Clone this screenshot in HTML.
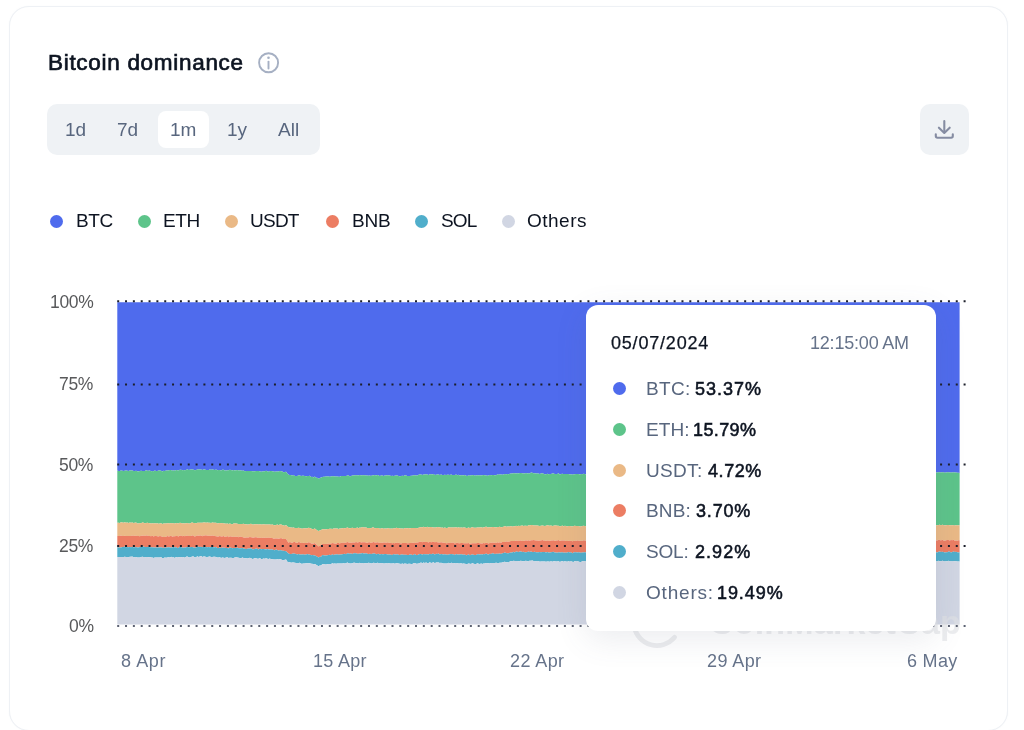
<!DOCTYPE html>
<html><head><meta charset="utf-8">
<style>
*{margin:0;padding:0;box-sizing:border-box}
html,body{width:1024px;height:730px;overflow:hidden;background:#fff;font-family:"Liberation Sans",sans-serif}
.t{position:absolute;white-space:nowrap;will-change:transform}
.b{position:absolute}
.d{position:absolute;border-radius:50%}
</style></head><body>
<div class="b" style="left:9px;top:6px;width:998.5px;height:725px;border:1px solid #eef1f5;border-radius:20px;background:#fff;box-shadow:0 0 1px rgba(200,206,220,0.25)"></div>
<div class="t" style="left:47.80px;top:49.00px;font-size:22.5px;line-height:27.0px;color:#0d1421;font-weight:400;letter-spacing:0.7px;-webkit-text-stroke:0.7px #0d1421;">Bitcoin dominance</div>
<svg class="b" style="left:256px;top:50px" width="26" height="26" viewBox="256 50 26 26">
<circle cx="268.6" cy="62.75" r="9.5" fill="none" stroke="#a6b0c3" stroke-width="1.9"/>
<circle cx="268.5" cy="57.8" r="1.3" fill="#a6b0c3"/>
<line x1="268.5" y1="61.6" x2="268.5" y2="68.6" stroke="#a6b0c3" stroke-width="1.9" stroke-linecap="round"/>
</svg>
<div class="b" style="left:47px;top:104px;width:273px;height:51px;background:#eff2f5;border-radius:10px"></div>
<div class="b" style="left:158px;top:111px;width:51px;height:37px;background:#fff;border-radius:8px"></div>
<div class="b" style="left:920px;top:104px;width:49px;height:51px;background:#eff2f5;border-radius:10px"></div>
<svg class="b" style="left:930px;top:112px" width="30" height="30" viewBox="930 112 30 30">
<path d="M944.3 121 V132" stroke="#858ca2" stroke-width="2.1" stroke-linecap="round" fill="none"/>
<path d="M938.9 127.7 L944.3 133 L949.7 127.7" stroke="#858ca2" stroke-width="2.1" stroke-linecap="round" stroke-linejoin="round" fill="none"/>
<path d="M935.8 134.2 V136.1 Q935.8 137.8 937.5 137.8 H951.1 Q952.8 137.8 952.8 136.1 V134.2" stroke="#858ca2" stroke-width="2.1" stroke-linecap="round" fill="none"/>
</svg>
<div class="t" style="left:65.40px;top:119.02px;font-size:19px;line-height:22.8px;color:#58667e;font-weight:400;letter-spacing:0px;">1d</div>
<div class="t" style="left:117.30px;top:119.02px;font-size:19px;line-height:22.8px;color:#58667e;font-weight:400;letter-spacing:0px;">7d</div>
<div class="t" style="left:170.00px;top:119.02px;font-size:19px;line-height:22.8px;color:#58667e;font-weight:400;letter-spacing:0px;">1m</div>
<div class="t" style="left:227.00px;top:119.02px;font-size:19px;line-height:22.8px;color:#58667e;font-weight:400;letter-spacing:0px;">1y</div>
<div class="t" style="left:278.00px;top:119.02px;font-size:19px;line-height:22.8px;color:#58667e;font-weight:400;letter-spacing:0px;">All</div>
<div class="d" style="left:49.90px;top:215.40px;width:13px;height:13px;background:#4f6bed"></div>
<div class="t" style="left:75.80px;top:210.02px;font-size:19px;line-height:22.8px;color:#0d1421;font-weight:400;letter-spacing:-0.45px;">BTC</div>
<div class="d" style="left:137.50px;top:215.40px;width:13px;height:13px;background:#5dc48a"></div>
<div class="t" style="left:163.20px;top:210.02px;font-size:19px;line-height:22.8px;color:#0d1421;font-weight:400;letter-spacing:-0.45px;">ETH</div>
<div class="d" style="left:224.90px;top:215.40px;width:13px;height:13px;background:#eab986"></div>
<div class="t" style="left:250.20px;top:210.02px;font-size:19px;line-height:22.8px;color:#0d1421;font-weight:400;letter-spacing:-0.75px;">USDT</div>
<div class="d" style="left:325.60px;top:215.40px;width:13px;height:13px;background:#ec7d63"></div>
<div class="t" style="left:352.00px;top:210.02px;font-size:19px;line-height:22.8px;color:#0d1421;font-weight:400;letter-spacing:-0.25px;">BNB</div>
<div class="d" style="left:414.50px;top:215.40px;width:13px;height:13px;background:#50aecb"></div>
<div class="t" style="left:440.60px;top:210.02px;font-size:19px;line-height:22.8px;color:#0d1421;font-weight:400;letter-spacing:-0.8px;">SOL</div>
<div class="d" style="left:501.70px;top:215.40px;width:13px;height:13px;background:#d1d6e3"></div>
<div class="t" style="left:527.00px;top:210.02px;font-size:19px;line-height:22.8px;color:#0d1421;font-weight:400;letter-spacing:0.5px;">Others</div>
<div class="t" style="right:930.70px;top:292.44px;font-size:17.5px;line-height:21.0px;color:#58595b;font-weight:400;letter-spacing:-0.3px">100%</div>
<div class="t" style="right:930.70px;top:374.34px;font-size:17.5px;line-height:21.0px;color:#58595b;font-weight:400;letter-spacing:-0.3px">75%</div>
<div class="t" style="right:930.70px;top:454.64px;font-size:17.5px;line-height:21.0px;color:#58595b;font-weight:400;letter-spacing:-0.3px">50%</div>
<div class="t" style="right:930.70px;top:535.84px;font-size:17.5px;line-height:21.0px;color:#58595b;font-weight:400;letter-spacing:-0.3px">25%</div>
<div class="t" style="right:930.70px;top:615.64px;font-size:17.5px;line-height:21.0px;color:#58595b;font-weight:400;letter-spacing:-0.3px">0%</div>
<svg class="b" style="left:0;top:0" width="1024" height="730" viewBox="0 0 1024 730"><polygon fill="#4f6bed" points="117.3,302.2 959.6,302.2 959.6,472.9 958.5,472.7 957.3,472.8 956.0,472.5 954.8,472.5 953.5,472.2 952.3,472.6 951.0,472.5 949.8,472.5 948.5,472.3 947.3,472.2 946.0,472.6 944.8,472.8 943.5,472.3 942.3,472.2 941.0,472.4 939.8,472.3 938.5,472.3 937.3,472.5 936.0,472.6 934.8,472.5 933.5,472.9 932.3,473.0 931.0,472.4 929.8,472.5 928.5,472.7 927.3,472.6 926.0,472.7 924.8,472.5 923.5,473.3 922.3,473.0 921.0,472.7 919.8,472.6 918.5,472.7 917.3,472.5 916.0,472.4 914.8,472.8 913.5,472.4 912.3,472.4 911.0,472.8 909.8,472.8 908.5,472.7 907.3,473.1 906.0,472.3 904.8,472.2 903.5,472.7 902.3,473.0 901.0,472.8 899.8,472.4 898.5,472.9 897.3,472.4 896.0,472.9 894.8,472.7 893.5,472.8 892.3,472.1 891.0,472.5 889.8,472.6 888.5,472.2 887.3,472.7 886.0,472.7 884.8,472.3 883.5,472.5 882.3,472.7 881.0,473.0 879.8,473.4 878.5,472.9 877.3,472.6 876.0,472.5 874.8,472.7 873.5,473.2 872.3,473.1 871.0,473.1 869.8,472.9 868.5,473.0 867.3,472.5 866.0,472.9 864.8,472.9 863.5,473.3 862.3,472.9 861.0,472.6 859.8,472.9 858.5,473.0 857.3,472.9 856.0,472.8 854.8,473.0 853.5,473.0 852.3,472.7 851.0,472.7 849.8,472.7 848.5,473.3 847.3,473.0 846.0,473.0 844.8,472.9 843.5,472.5 842.3,472.7 841.0,472.7 839.8,472.8 838.5,472.5 837.3,473.1 836.0,473.0 834.8,473.2 833.5,472.8 832.3,473.3 831.0,473.2 829.8,473.3 828.5,472.8 827.3,473.3 826.0,473.3 824.8,473.0 823.5,473.6 822.3,472.9 821.0,473.2 819.8,473.1 818.5,472.8 817.3,473.2 816.0,473.0 814.8,473.1 813.5,473.6 812.3,472.7 811.0,472.7 809.8,473.2 808.5,472.7 807.3,472.8 806.0,473.3 804.8,472.8 803.5,473.0 802.3,473.4 801.0,473.1 799.8,473.4 798.5,472.9 797.3,472.9 796.0,473.0 794.8,473.3 793.5,472.8 792.3,473.0 791.0,473.4 789.8,472.7 788.5,472.8 787.3,473.1 786.0,473.4 784.8,472.6 783.5,473.7 782.3,473.4 781.0,472.9 779.8,473.1 778.5,473.6 777.3,473.4 776.0,473.2 774.8,473.5 773.5,472.9 772.3,473.5 771.0,473.7 769.8,473.2 768.5,472.7 767.3,473.0 766.0,472.8 764.8,473.2 763.5,472.9 762.3,473.2 761.0,473.3 759.8,473.4 758.5,473.0 757.3,473.5 756.0,473.1 754.8,473.3 753.5,473.1 752.3,473.5 751.0,473.4 749.8,473.4 748.5,473.4 747.3,473.7 746.0,472.9 744.8,473.7 743.5,473.5 742.3,473.1 741.0,473.4 739.8,473.4 738.5,472.9 737.3,472.8 736.0,473.1 734.8,473.5 733.5,473.1 732.3,473.7 731.0,473.4 729.8,473.2 728.5,473.6 727.3,473.6 726.0,473.5 724.8,473.7 723.5,473.2 722.3,473.8 721.0,473.8 719.8,473.8 718.5,473.7 717.3,473.1 716.0,473.7 714.8,473.5 713.5,473.6 712.3,473.3 711.0,473.7 709.8,473.6 708.5,473.8 707.3,473.9 706.0,473.7 704.8,473.8 703.5,473.3 702.3,473.6 701.0,473.2 699.8,473.4 698.5,473.5 697.3,473.5 696.0,473.5 694.8,473.6 693.5,473.7 692.3,473.9 691.0,473.2 689.8,473.3 688.5,473.9 687.3,473.9 686.0,473.3 684.8,473.5 683.5,473.6 682.3,473.4 681.0,474.1 679.8,473.1 678.5,473.0 677.3,474.1 676.0,473.8 674.8,473.7 673.5,473.5 672.3,473.1 671.0,473.4 669.8,473.7 668.5,473.6 667.3,474.0 666.0,473.1 664.8,473.5 663.5,473.2 662.3,473.6 661.0,474.1 659.8,473.6 658.5,473.7 657.3,473.8 656.0,473.7 654.8,474.2 653.5,473.9 652.3,474.1 651.0,473.7 649.8,473.2 648.5,473.7 647.3,473.5 646.0,473.7 644.8,473.9 643.5,473.5 642.3,473.7 641.0,473.5 639.8,474.0 638.5,474.1 637.3,473.4 636.0,473.7 634.8,474.4 633.5,474.5 632.3,473.5 631.0,474.3 629.8,473.5 628.5,473.4 627.3,474.4 626.0,473.9 624.8,474.2 623.5,473.5 622.3,474.5 621.0,474.3 619.8,473.9 618.5,473.9 617.3,473.9 616.0,474.3 614.8,473.5 613.5,474.0 612.3,474.3 611.0,473.8 609.8,473.7 608.5,473.9 607.3,474.3 606.0,474.1 604.8,473.8 603.5,473.9 602.3,474.0 601.0,473.9 599.8,473.4 598.5,474.2 597.3,473.8 596.0,473.9 594.8,474.4 593.5,474.1 592.3,473.5 591.0,473.6 589.8,474.1 588.5,473.6 587.3,474.0 586.0,474.5 584.8,473.9 583.5,473.7 582.3,474.3 581.0,474.1 579.8,474.6 578.5,474.1 577.3,474.0 576.0,473.9 574.8,474.2 573.5,474.3 572.3,474.7 571.0,474.2 569.8,474.5 568.5,474.1 567.3,473.9 566.0,473.9 564.8,474.0 563.5,474.1 562.3,473.8 561.0,474.0 559.8,474.4 558.5,473.3 557.3,473.9 556.0,473.9 554.8,473.9 553.5,473.4 552.3,473.6 551.0,474.0 549.8,474.0 548.5,474.3 547.3,473.7 546.0,474.3 544.8,474.3 543.5,473.8 542.3,473.2 541.0,473.5 539.8,474.0 538.5,473.4 537.3,473.5 536.0,473.4 534.8,473.3 533.5,473.2 532.3,472.8 531.0,472.6 529.8,473.5 528.5,473.2 527.3,473.6 526.0,473.1 524.8,473.5 523.5,473.4 522.3,473.2 521.0,473.0 519.8,472.9 518.5,473.4 517.3,473.2 516.0,473.4 514.8,473.3 513.5,473.3 512.3,473.5 511.1,473.5 509.8,473.7 508.6,474.2 507.3,474.0 506.1,474.3 504.8,473.9 503.6,474.4 502.3,474.7 501.1,474.6 499.8,474.5 498.6,474.7 497.3,474.4 496.1,475.3 494.8,475.3 493.6,475.1 492.3,474.9 491.1,475.3 489.8,475.0 488.6,475.5 487.3,475.7 486.1,475.4 484.8,475.2 483.6,474.9 482.3,475.3 481.1,475.5 479.8,475.3 478.6,475.6 477.3,475.3 476.1,475.4 474.8,475.7 473.6,475.1 472.3,475.3 471.1,475.2 469.8,475.7 468.6,475.2 467.3,475.9 466.1,475.7 464.8,475.0 463.6,475.4 462.3,475.3 461.1,475.2 459.8,475.5 458.6,474.7 457.3,475.2 456.1,474.5 454.8,475.1 453.6,474.9 452.3,474.9 451.1,474.6 449.8,475.0 448.6,474.7 447.3,474.8 446.1,474.9 444.8,474.8 443.6,475.0 442.3,475.1 441.1,474.5 439.8,475.0 438.6,474.5 437.3,474.4 436.1,474.8 434.8,475.0 433.6,474.0 432.3,474.5 431.1,474.2 429.8,474.2 428.6,475.0 427.3,474.5 426.1,474.2 424.8,474.6 423.6,474.5 422.3,475.1 421.1,474.5 419.8,474.5 418.6,474.7 417.3,475.6 416.1,475.4 414.8,475.2 413.6,475.2 412.3,475.8 411.1,475.8 409.8,475.9 408.6,476.1 407.3,476.0 406.1,475.6 404.8,475.3 403.6,476.1 402.3,475.8 401.1,476.0 399.8,476.2 398.6,475.9 397.3,475.6 396.1,475.6 394.8,475.7 393.6,475.9 392.3,475.7 391.1,475.9 389.8,475.6 388.6,475.4 387.3,475.2 386.1,475.4 384.8,475.5 383.6,476.1 382.3,475.5 381.1,475.4 379.8,476.0 378.6,475.4 377.3,475.0 376.1,475.4 374.8,475.1 373.6,475.4 372.3,475.2 371.1,475.9 369.8,475.6 368.6,475.7 367.3,475.4 366.1,475.4 364.8,475.2 363.6,475.3 362.3,475.2 361.1,475.5 359.8,474.9 358.6,475.4 357.3,475.3 356.1,475.3 354.8,475.3 353.6,475.4 352.3,475.4 351.1,476.0 349.8,476.3 348.6,475.5 347.3,475.5 346.1,476.0 344.8,475.9 343.6,476.1 342.3,476.1 341.1,475.9 339.8,476.7 338.6,476.7 337.3,476.6 336.1,476.5 334.8,476.5 333.6,476.2 332.3,476.3 331.1,476.5 329.8,476.7 328.6,476.5 327.3,476.6 326.1,476.6 324.8,476.8 323.6,476.8 322.3,476.9 321.1,477.5 319.8,477.9 318.6,478.8 317.3,477.8 316.1,477.8 314.8,476.4 313.6,477.4 312.3,476.7 311.1,476.9 309.8,475.8 308.6,476.1 307.3,475.9 306.1,476.3 304.8,476.0 303.6,475.8 302.3,475.7 301.1,476.1 299.8,475.4 298.6,475.2 297.3,476.1 296.1,476.0 294.8,475.9 293.6,475.1 292.3,475.8 291.1,475.1 289.8,475.1 288.6,474.8 287.3,473.5 286.1,471.8 284.8,471.9 283.6,472.2 282.3,471.6 281.1,471.3 279.8,471.1 278.6,471.5 277.3,471.4 276.1,471.5 274.8,471.7 273.6,471.5 272.3,471.2 271.1,471.1 269.8,470.9 268.6,471.7 267.3,471.3 266.1,470.8 264.8,471.2 263.6,471.3 262.3,471.4 261.1,471.7 259.8,471.2 258.6,471.1 257.3,471.1 256.1,470.9 254.8,471.2 253.6,471.3 252.3,471.2 251.1,471.1 249.8,471.0 248.6,471.0 247.3,470.9 246.1,471.1 244.8,471.2 243.6,470.6 242.3,470.8 241.1,470.5 239.8,470.3 238.6,470.4 237.3,470.1 236.1,470.3 234.8,470.5 233.6,470.1 232.3,470.4 231.1,469.9 229.8,469.8 228.6,470.3 227.3,470.3 226.1,470.4 224.8,470.4 223.6,469.8 222.3,469.7 221.1,470.6 219.8,470.1 218.6,470.0 217.3,470.2 216.1,469.6 214.8,470.1 213.6,469.8 212.3,469.6 211.1,469.8 209.8,469.4 208.6,469.9 207.3,470.0 206.1,470.0 204.8,469.6 203.6,469.5 202.3,469.9 201.1,469.6 199.8,469.6 198.6,469.5 197.3,469.5 196.1,470.1 194.8,470.2 193.6,469.7 192.3,469.5 191.1,469.6 189.8,469.8 188.6,469.9 187.3,469.3 186.1,469.9 184.8,470.2 183.6,469.9 182.3,470.2 181.1,469.7 179.8,469.8 178.6,470.6 177.3,470.3 176.1,470.0 174.8,470.7 173.6,470.2 172.3,470.7 171.1,469.9 169.8,470.1 168.6,470.4 167.3,470.6 166.1,470.5 164.8,471.0 163.6,470.8 162.3,471.4 161.1,470.8 159.8,470.5 158.6,470.6 157.3,471.0 156.1,471.0 154.8,470.6 153.6,471.3 152.3,471.0 151.1,471.2 149.8,470.6 148.6,470.8 147.3,470.8 146.1,470.3 144.8,470.9 143.6,470.9 142.3,470.9 141.1,470.8 139.8,471.1 138.6,471.5 137.3,471.3 136.1,470.8 134.8,471.1 133.6,470.9 132.3,470.5 131.1,470.6 129.8,470.5 128.6,470.9 127.3,470.8 126.0,470.6 124.8,470.8 123.5,471.1 122.3,470.7 121.0,470.6 119.8,470.9 118.5,471.0 117.3,470.6"/><polygon fill="#5dc48a" points="117.3,470.6 118.5,471.0 119.8,470.9 121.0,470.6 122.3,470.7 123.5,471.1 124.8,470.8 126.0,470.6 127.3,470.8 128.6,470.9 129.8,470.5 131.1,470.6 132.3,470.5 133.6,470.9 134.8,471.1 136.1,470.8 137.3,471.3 138.6,471.5 139.8,471.1 141.1,470.8 142.3,470.9 143.6,470.9 144.8,470.9 146.1,470.3 147.3,470.8 148.6,470.8 149.8,470.6 151.1,471.2 152.3,471.0 153.6,471.3 154.8,470.6 156.1,471.0 157.3,471.0 158.6,470.6 159.8,470.5 161.1,470.8 162.3,471.4 163.6,470.8 164.8,471.0 166.1,470.5 167.3,470.6 168.6,470.4 169.8,470.1 171.1,469.9 172.3,470.7 173.6,470.2 174.8,470.7 176.1,470.0 177.3,470.3 178.6,470.6 179.8,469.8 181.1,469.7 182.3,470.2 183.6,469.9 184.8,470.2 186.1,469.9 187.3,469.3 188.6,469.9 189.8,469.8 191.1,469.6 192.3,469.5 193.6,469.7 194.8,470.2 196.1,470.1 197.3,469.5 198.6,469.5 199.8,469.6 201.1,469.6 202.3,469.9 203.6,469.5 204.8,469.6 206.1,470.0 207.3,470.0 208.6,469.9 209.8,469.4 211.1,469.8 212.3,469.6 213.6,469.8 214.8,470.1 216.1,469.6 217.3,470.2 218.6,470.0 219.8,470.1 221.1,470.6 222.3,469.7 223.6,469.8 224.8,470.4 226.1,470.4 227.3,470.3 228.6,470.3 229.8,469.8 231.1,469.9 232.3,470.4 233.6,470.1 234.8,470.5 236.1,470.3 237.3,470.1 238.6,470.4 239.8,470.3 241.1,470.5 242.3,470.8 243.6,470.6 244.8,471.2 246.1,471.1 247.3,470.9 248.6,471.0 249.8,471.0 251.1,471.1 252.3,471.2 253.6,471.3 254.8,471.2 256.1,470.9 257.3,471.1 258.6,471.1 259.8,471.2 261.1,471.7 262.3,471.4 263.6,471.3 264.8,471.2 266.1,470.8 267.3,471.3 268.6,471.7 269.8,470.9 271.1,471.1 272.3,471.2 273.6,471.5 274.8,471.7 276.1,471.5 277.3,471.4 278.6,471.5 279.8,471.1 281.1,471.3 282.3,471.6 283.6,472.2 284.8,471.9 286.1,471.8 287.3,473.5 288.6,474.8 289.8,475.1 291.1,475.1 292.3,475.8 293.6,475.1 294.8,475.9 296.1,476.0 297.3,476.1 298.6,475.2 299.8,475.4 301.1,476.1 302.3,475.7 303.6,475.8 304.8,476.0 306.1,476.3 307.3,475.9 308.6,476.1 309.8,475.8 311.1,476.9 312.3,476.7 313.6,477.4 314.8,476.4 316.1,477.8 317.3,477.8 318.6,478.8 319.8,477.9 321.1,477.5 322.3,476.9 323.6,476.8 324.8,476.8 326.1,476.6 327.3,476.6 328.6,476.5 329.8,476.7 331.1,476.5 332.3,476.3 333.6,476.2 334.8,476.5 336.1,476.5 337.3,476.6 338.6,476.7 339.8,476.7 341.1,475.9 342.3,476.1 343.6,476.1 344.8,475.9 346.1,476.0 347.3,475.5 348.6,475.5 349.8,476.3 351.1,476.0 352.3,475.4 353.6,475.4 354.8,475.3 356.1,475.3 357.3,475.3 358.6,475.4 359.8,474.9 361.1,475.5 362.3,475.2 363.6,475.3 364.8,475.2 366.1,475.4 367.3,475.4 368.6,475.7 369.8,475.6 371.1,475.9 372.3,475.2 373.6,475.4 374.8,475.1 376.1,475.4 377.3,475.0 378.6,475.4 379.8,476.0 381.1,475.4 382.3,475.5 383.6,476.1 384.8,475.5 386.1,475.4 387.3,475.2 388.6,475.4 389.8,475.6 391.1,475.9 392.3,475.7 393.6,475.9 394.8,475.7 396.1,475.6 397.3,475.6 398.6,475.9 399.8,476.2 401.1,476.0 402.3,475.8 403.6,476.1 404.8,475.3 406.1,475.6 407.3,476.0 408.6,476.1 409.8,475.9 411.1,475.8 412.3,475.8 413.6,475.2 414.8,475.2 416.1,475.4 417.3,475.6 418.6,474.7 419.8,474.5 421.1,474.5 422.3,475.1 423.6,474.5 424.8,474.6 426.1,474.2 427.3,474.5 428.6,475.0 429.8,474.2 431.1,474.2 432.3,474.5 433.6,474.0 434.8,475.0 436.1,474.8 437.3,474.4 438.6,474.5 439.8,475.0 441.1,474.5 442.3,475.1 443.6,475.0 444.8,474.8 446.1,474.9 447.3,474.8 448.6,474.7 449.8,475.0 451.1,474.6 452.3,474.9 453.6,474.9 454.8,475.1 456.1,474.5 457.3,475.2 458.6,474.7 459.8,475.5 461.1,475.2 462.3,475.3 463.6,475.4 464.8,475.0 466.1,475.7 467.3,475.9 468.6,475.2 469.8,475.7 471.1,475.2 472.3,475.3 473.6,475.1 474.8,475.7 476.1,475.4 477.3,475.3 478.6,475.6 479.8,475.3 481.1,475.5 482.3,475.3 483.6,474.9 484.8,475.2 486.1,475.4 487.3,475.7 488.6,475.5 489.8,475.0 491.1,475.3 492.3,474.9 493.6,475.1 494.8,475.3 496.1,475.3 497.3,474.4 498.6,474.7 499.8,474.5 501.1,474.6 502.3,474.7 503.6,474.4 504.8,473.9 506.1,474.3 507.3,474.0 508.6,474.2 509.8,473.7 511.1,473.5 512.3,473.5 513.5,473.3 514.8,473.3 516.0,473.4 517.3,473.2 518.5,473.4 519.8,472.9 521.0,473.0 522.3,473.2 523.5,473.4 524.8,473.5 526.0,473.1 527.3,473.6 528.5,473.2 529.8,473.5 531.0,472.6 532.3,472.8 533.5,473.2 534.8,473.3 536.0,473.4 537.3,473.5 538.5,473.4 539.8,474.0 541.0,473.5 542.3,473.2 543.5,473.8 544.8,474.3 546.0,474.3 547.3,473.7 548.5,474.3 549.8,474.0 551.0,474.0 552.3,473.6 553.5,473.4 554.8,473.9 556.0,473.9 557.3,473.9 558.5,473.3 559.8,474.4 561.0,474.0 562.3,473.8 563.5,474.1 564.8,474.0 566.0,473.9 567.3,473.9 568.5,474.1 569.8,474.5 571.0,474.2 572.3,474.7 573.5,474.3 574.8,474.2 576.0,473.9 577.3,474.0 578.5,474.1 579.8,474.6 581.0,474.1 582.3,474.3 583.5,473.7 584.8,473.9 586.0,474.5 587.3,474.0 588.5,473.6 589.8,474.1 591.0,473.6 592.3,473.5 593.5,474.1 594.8,474.4 596.0,473.9 597.3,473.8 598.5,474.2 599.8,473.4 601.0,473.9 602.3,474.0 603.5,473.9 604.8,473.8 606.0,474.1 607.3,474.3 608.5,473.9 609.8,473.7 611.0,473.8 612.3,474.3 613.5,474.0 614.8,473.5 616.0,474.3 617.3,473.9 618.5,473.9 619.8,473.9 621.0,474.3 622.3,474.5 623.5,473.5 624.8,474.2 626.0,473.9 627.3,474.4 628.5,473.4 629.8,473.5 631.0,474.3 632.3,473.5 633.5,474.5 634.8,474.4 636.0,473.7 637.3,473.4 638.5,474.1 639.8,474.0 641.0,473.5 642.3,473.7 643.5,473.5 644.8,473.9 646.0,473.7 647.3,473.5 648.5,473.7 649.8,473.2 651.0,473.7 652.3,474.1 653.5,473.9 654.8,474.2 656.0,473.7 657.3,473.8 658.5,473.7 659.8,473.6 661.0,474.1 662.3,473.6 663.5,473.2 664.8,473.5 666.0,473.1 667.3,474.0 668.5,473.6 669.8,473.7 671.0,473.4 672.3,473.1 673.5,473.5 674.8,473.7 676.0,473.8 677.3,474.1 678.5,473.0 679.8,473.1 681.0,474.1 682.3,473.4 683.5,473.6 684.8,473.5 686.0,473.3 687.3,473.9 688.5,473.9 689.8,473.3 691.0,473.2 692.3,473.9 693.5,473.7 694.8,473.6 696.0,473.5 697.3,473.5 698.5,473.5 699.8,473.4 701.0,473.2 702.3,473.6 703.5,473.3 704.8,473.8 706.0,473.7 707.3,473.9 708.5,473.8 709.8,473.6 711.0,473.7 712.3,473.3 713.5,473.6 714.8,473.5 716.0,473.7 717.3,473.1 718.5,473.7 719.8,473.8 721.0,473.8 722.3,473.8 723.5,473.2 724.8,473.7 726.0,473.5 727.3,473.6 728.5,473.6 729.8,473.2 731.0,473.4 732.3,473.7 733.5,473.1 734.8,473.5 736.0,473.1 737.3,472.8 738.5,472.9 739.8,473.4 741.0,473.4 742.3,473.1 743.5,473.5 744.8,473.7 746.0,472.9 747.3,473.7 748.5,473.4 749.8,473.4 751.0,473.4 752.3,473.5 753.5,473.1 754.8,473.3 756.0,473.1 757.3,473.5 758.5,473.0 759.8,473.4 761.0,473.3 762.3,473.2 763.5,472.9 764.8,473.2 766.0,472.8 767.3,473.0 768.5,472.7 769.8,473.2 771.0,473.7 772.3,473.5 773.5,472.9 774.8,473.5 776.0,473.2 777.3,473.4 778.5,473.6 779.8,473.1 781.0,472.9 782.3,473.4 783.5,473.7 784.8,472.6 786.0,473.4 787.3,473.1 788.5,472.8 789.8,472.7 791.0,473.4 792.3,473.0 793.5,472.8 794.8,473.3 796.0,473.0 797.3,472.9 798.5,472.9 799.8,473.4 801.0,473.1 802.3,473.4 803.5,473.0 804.8,472.8 806.0,473.3 807.3,472.8 808.5,472.7 809.8,473.2 811.0,472.7 812.3,472.7 813.5,473.6 814.8,473.1 816.0,473.0 817.3,473.2 818.5,472.8 819.8,473.1 821.0,473.2 822.3,472.9 823.5,473.6 824.8,473.0 826.0,473.3 827.3,473.3 828.5,472.8 829.8,473.3 831.0,473.2 832.3,473.3 833.5,472.8 834.8,473.2 836.0,473.0 837.3,473.1 838.5,472.5 839.8,472.8 841.0,472.7 842.3,472.7 843.5,472.5 844.8,472.9 846.0,473.0 847.3,473.0 848.5,473.3 849.8,472.7 851.0,472.7 852.3,472.7 853.5,473.0 854.8,473.0 856.0,472.8 857.3,472.9 858.5,473.0 859.8,472.9 861.0,472.6 862.3,472.9 863.5,473.3 864.8,472.9 866.0,472.9 867.3,472.5 868.5,473.0 869.8,472.9 871.0,473.1 872.3,473.1 873.5,473.2 874.8,472.7 876.0,472.5 877.3,472.6 878.5,472.9 879.8,473.4 881.0,473.0 882.3,472.7 883.5,472.5 884.8,472.3 886.0,472.7 887.3,472.7 888.5,472.2 889.8,472.6 891.0,472.5 892.3,472.1 893.5,472.8 894.8,472.7 896.0,472.9 897.3,472.4 898.5,472.9 899.8,472.4 901.0,472.8 902.3,473.0 903.5,472.7 904.8,472.2 906.0,472.3 907.3,473.1 908.5,472.7 909.8,472.8 911.0,472.8 912.3,472.4 913.5,472.4 914.8,472.8 916.0,472.4 917.3,472.5 918.5,472.7 919.8,472.6 921.0,472.7 922.3,473.0 923.5,473.3 924.8,472.5 926.0,472.7 927.3,472.6 928.5,472.7 929.8,472.5 931.0,472.4 932.3,473.0 933.5,472.9 934.8,472.5 936.0,472.6 937.3,472.5 938.5,472.3 939.8,472.3 941.0,472.4 942.3,472.2 943.5,472.3 944.8,472.8 946.0,472.6 947.3,472.2 948.5,472.3 949.8,472.5 951.0,472.5 952.3,472.6 953.5,472.2 954.8,472.5 956.0,472.5 957.3,472.8 958.5,472.7 959.6,472.9 959.6,525.3 958.5,525.3 957.3,525.6 956.0,525.1 954.8,525.7 953.5,524.9 952.3,525.2 951.0,525.3 949.8,525.3 948.5,525.0 947.3,525.0 946.0,525.3 944.8,525.4 943.5,525.0 942.3,524.7 941.0,525.2 939.8,524.8 938.5,525.0 937.3,525.2 936.0,525.2 934.8,525.1 933.5,525.4 932.3,525.2 931.0,525.0 929.8,524.9 928.5,525.8 927.3,525.1 926.0,525.0 924.8,525.1 923.5,525.2 922.3,525.4 921.0,525.5 919.8,524.8 918.5,525.8 917.3,525.4 916.0,525.1 914.8,525.3 913.5,525.4 912.3,525.2 911.0,525.4 909.8,525.3 908.5,525.1 907.3,525.2 906.0,525.0 904.8,525.1 903.5,525.7 902.3,525.2 901.0,524.8 899.8,525.2 898.5,525.1 897.3,524.9 896.0,525.3 894.8,525.3 893.5,525.3 892.3,525.2 891.0,524.9 889.8,525.5 888.5,524.7 887.3,525.7 886.0,525.6 884.8,525.3 883.5,524.9 882.3,525.1 881.0,525.2 879.8,525.6 878.5,525.8 877.3,525.4 876.0,524.8 874.8,525.6 873.5,525.7 872.3,525.4 871.0,525.4 869.8,525.1 868.5,525.3 867.3,524.9 866.0,525.5 864.8,525.7 863.5,525.8 862.3,524.9 861.0,525.0 859.8,525.7 858.5,526.0 857.3,525.4 856.0,525.5 854.8,525.4 853.5,525.2 852.3,525.7 851.0,525.1 849.8,525.5 848.5,525.3 847.3,525.1 846.0,524.8 844.8,525.1 843.5,525.2 842.3,525.2 841.0,525.3 839.8,525.3 838.5,525.2 837.3,525.5 836.0,525.5 834.8,525.6 833.5,525.4 832.3,525.4 831.0,526.0 829.8,525.5 828.5,524.9 827.3,526.0 826.0,525.3 824.8,525.0 823.5,525.7 822.3,525.3 821.0,525.5 819.8,525.7 818.5,525.0 817.3,525.5 816.0,525.4 814.8,525.1 813.5,525.5 812.3,525.2 811.0,525.1 809.8,524.9 808.5,525.3 807.3,525.0 806.0,525.5 804.8,525.2 803.5,525.4 802.3,525.5 801.0,525.2 799.8,525.2 798.5,525.3 797.3,525.6 796.0,525.2 794.8,525.7 793.5,525.4 792.3,525.5 791.0,525.5 789.8,525.5 788.5,525.7 787.3,525.3 786.0,525.7 784.8,525.0 783.5,525.9 782.3,525.3 781.0,525.0 779.8,525.4 778.5,525.5 777.3,525.5 776.0,525.8 774.8,525.9 773.5,525.8 772.3,525.4 771.0,525.5 769.8,525.0 768.5,525.2 767.3,525.2 766.0,525.4 764.8,525.3 763.5,525.6 762.3,525.1 761.0,525.3 759.8,525.5 758.5,525.5 757.3,526.1 756.0,525.8 754.8,525.6 753.5,525.6 752.3,526.2 751.0,525.2 749.8,525.8 748.5,525.3 747.3,525.9 746.0,525.4 744.8,525.7 743.5,525.8 742.3,525.1 741.0,525.3 739.8,525.6 738.5,525.3 737.3,525.4 736.0,525.4 734.8,525.4 733.5,525.0 732.3,525.4 731.0,525.5 729.8,525.5 728.5,525.7 727.3,525.6 726.0,526.0 724.8,525.6 723.5,525.5 722.3,525.8 721.0,525.7 719.8,525.4 718.5,526.1 717.3,525.7 716.0,526.0 714.8,525.6 713.5,525.6 712.3,525.4 711.0,525.7 709.8,525.8 708.5,526.1 707.3,525.6 706.0,526.0 704.8,526.0 703.5,525.4 702.3,525.4 701.0,525.1 699.8,525.6 698.5,525.5 697.3,525.5 696.0,525.5 694.8,525.2 693.5,526.2 692.3,525.6 691.0,525.4 689.8,525.6 688.5,525.6 687.3,525.4 686.0,526.0 684.8,525.7 683.5,526.0 682.3,525.9 681.0,525.9 679.8,525.7 678.5,525.7 677.3,526.3 676.0,526.1 674.8,526.1 673.5,525.4 672.3,525.5 671.0,525.4 669.8,525.8 668.5,525.8 667.3,525.4 666.0,525.7 664.8,525.8 663.5,525.3 662.3,525.7 661.0,526.1 659.8,525.7 658.5,525.9 657.3,525.5 656.0,525.8 654.8,525.8 653.5,526.1 652.3,526.0 651.0,525.9 649.8,525.7 648.5,525.8 647.3,525.7 646.0,525.4 644.8,526.3 643.5,525.5 642.3,526.0 641.0,525.4 639.8,525.8 638.5,526.2 637.3,525.5 636.0,525.9 634.8,526.1 633.5,526.1 632.3,525.6 631.0,525.9 629.8,525.7 628.5,525.9 627.3,526.4 626.0,526.1 624.8,526.4 623.5,525.7 622.3,526.3 621.0,526.3 619.8,526.0 618.5,526.2 617.3,525.9 616.0,526.1 614.8,525.6 613.5,525.9 612.3,525.9 611.0,526.2 609.8,525.9 608.5,525.9 607.3,526.0 606.0,526.0 604.8,525.8 603.5,526.1 602.3,525.5 601.0,526.1 599.8,525.6 598.5,526.0 597.3,526.1 596.0,526.1 594.8,526.5 593.5,525.7 592.3,525.8 591.0,525.8 589.8,526.6 588.5,525.6 587.3,526.1 586.0,526.2 584.8,526.0 583.5,525.7 582.3,525.9 581.0,526.5 579.8,526.4 578.5,525.9 577.3,525.9 576.0,526.0 574.8,525.8 573.5,526.1 572.3,526.4 571.0,526.2 569.8,525.9 568.5,525.9 567.3,526.4 566.0,526.1 564.8,525.8 563.5,526.5 562.3,525.6 561.0,526.2 559.8,526.3 558.5,525.8 557.3,525.8 556.0,525.6 554.8,525.6 553.5,525.8 552.3,526.1 551.0,525.6 549.8,525.7 548.5,525.6 547.3,525.3 546.0,525.7 544.8,526.0 543.5,525.8 542.3,525.4 541.0,525.8 539.8,526.0 538.5,525.7 537.3,525.4 536.0,525.6 534.8,525.5 533.5,525.4 532.3,524.9 531.0,525.1 529.8,525.5 528.5,525.2 527.3,526.0 526.0,525.7 524.8,525.8 523.5,526.0 522.3,525.5 521.0,525.7 519.8,525.9 518.5,525.8 517.3,526.2 516.0,525.8 514.8,526.5 513.5,526.1 512.3,526.8 511.1,526.1 509.8,526.6 508.6,526.4 507.3,526.5 506.1,526.8 504.8,526.1 503.6,526.8 502.3,526.9 501.1,527.3 499.8,526.8 498.6,526.9 497.3,527.0 496.1,527.5 494.8,527.2 493.6,527.0 492.3,527.1 491.1,527.2 489.8,527.2 488.6,527.3 487.3,527.4 486.1,526.6 484.8,527.3 483.6,527.3 482.3,527.7 481.1,527.3 479.8,527.5 478.6,527.4 477.3,527.4 476.1,527.7 474.8,527.7 473.6,527.7 472.3,527.0 471.1,527.8 469.8,527.9 468.6,527.4 467.3,528.1 466.1,528.1 464.8,527.6 463.6,527.6 462.3,527.8 461.1,527.5 459.8,527.8 458.6,527.2 457.3,527.8 456.1,527.3 454.8,527.5 453.6,527.5 452.3,527.6 451.1,527.5 449.8,527.4 448.6,527.2 447.3,527.9 446.1,527.9 444.8,527.6 443.6,528.0 442.3,527.6 441.1,527.8 439.8,527.3 438.6,527.3 437.3,527.1 436.1,527.5 434.8,527.4 433.6,527.4 432.3,527.3 431.1,526.9 429.8,526.9 428.6,527.5 427.3,526.8 426.1,527.2 424.8,527.3 423.6,526.7 422.3,527.4 421.1,526.9 419.8,527.4 418.6,527.7 417.3,528.3 416.1,527.9 414.8,528.0 413.6,527.9 412.3,527.9 411.1,528.0 409.8,528.4 408.6,528.0 407.3,528.2 406.1,528.2 404.8,528.0 403.6,528.8 402.3,528.6 401.1,528.5 399.8,528.5 398.6,528.1 397.3,528.1 396.1,527.8 394.8,528.6 393.6,528.0 392.3,528.7 391.1,528.5 389.8,528.8 388.6,528.0 387.3,528.4 386.1,528.6 384.8,528.4 383.6,528.8 382.3,528.1 381.1,528.5 379.8,528.7 378.6,528.1 377.3,527.9 376.1,527.9 374.8,528.2 373.6,527.5 372.3,527.5 371.1,528.3 369.8,527.9 368.6,528.1 367.3,527.9 366.1,527.4 364.8,527.5 363.6,527.6 362.3,527.1 361.1,527.7 359.8,527.6 358.6,528.2 357.3,527.6 356.1,528.0 354.8,528.0 353.6,527.9 352.3,527.7 351.1,528.1 349.8,528.3 348.6,528.0 347.3,527.4 346.1,528.0 344.8,528.3 343.6,528.0 342.3,528.3 341.1,528.6 339.8,528.4 338.6,528.9 337.3,528.4 336.1,528.5 334.8,528.5 333.6,528.6 332.3,528.9 331.1,528.7 329.8,528.7 328.6,528.9 327.3,529.1 326.1,529.4 324.8,529.2 323.6,529.2 322.3,529.3 321.1,530.1 319.8,530.6 318.6,531.1 317.3,530.4 316.1,529.5 314.8,528.6 313.6,529.0 312.3,529.2 311.1,528.6 309.8,527.9 308.6,527.8 307.3,528.3 306.1,528.3 304.8,528.4 303.6,528.1 302.3,528.7 301.1,528.5 299.8,528.0 298.6,527.7 297.3,527.9 296.1,528.1 294.8,528.0 293.6,527.5 292.3,527.7 291.1,527.6 289.8,527.4 288.6,527.0 287.3,526.4 286.1,524.9 284.8,525.7 283.6,525.6 282.3,525.0 281.1,524.6 279.8,524.5 278.6,525.3 277.3,524.4 276.1,525.1 274.8,525.2 273.6,524.9 272.3,524.6 271.1,524.7 269.8,524.5 268.6,524.6 267.3,524.5 266.1,524.5 264.8,524.5 263.6,524.2 262.3,524.5 261.1,524.5 259.8,524.3 258.6,524.5 257.3,524.2 256.1,524.2 254.8,524.3 253.6,524.5 252.3,524.6 251.1,523.8 249.8,523.9 248.6,524.6 247.3,524.4 246.1,524.2 244.8,524.2 243.6,523.8 242.3,524.0 241.1,523.9 239.8,523.9 238.6,523.9 237.3,523.8 236.1,523.6 234.8,523.6 233.6,523.4 232.3,524.3 231.1,523.9 229.8,523.4 228.6,524.1 227.3,523.6 226.1,523.7 224.8,523.5 223.6,523.6 222.3,522.9 221.1,523.3 219.8,522.9 218.6,523.2 217.3,523.5 216.1,522.7 214.8,522.7 213.6,522.8 212.3,522.5 211.1,523.0 209.8,522.7 208.6,522.8 207.3,522.4 206.1,522.7 204.8,522.6 203.6,522.5 202.3,522.7 201.1,522.7 199.8,522.8 198.6,522.8 197.3,522.7 196.1,523.2 194.8,523.1 193.6,523.1 192.3,522.6 191.1,522.8 189.8,523.6 188.6,523.4 187.3,522.9 186.1,523.2 184.8,523.6 183.6,523.3 182.3,523.5 181.1,522.9 179.8,522.8 178.6,523.6 177.3,523.3 176.1,523.1 174.8,523.7 173.6,523.1 172.3,523.4 171.1,522.9 169.8,523.6 168.6,523.2 167.3,523.2 166.1,523.6 164.8,523.5 163.6,523.5 162.3,524.1 161.1,523.2 159.8,523.6 158.6,523.7 157.3,523.2 156.1,523.4 154.8,523.2 153.6,523.6 152.3,523.3 151.1,523.4 149.8,523.2 148.6,523.0 147.3,522.8 146.1,523.1 144.8,523.2 143.6,522.7 142.3,522.6 141.1,523.2 139.8,522.9 138.6,523.4 137.3,523.6 136.1,522.5 134.8,522.7 133.6,522.9 132.3,522.5 131.1,522.7 129.8,522.6 128.6,523.0 127.3,522.6 126.0,522.7 124.8,522.2 123.5,522.7 122.3,522.6 121.0,522.3 119.8,523.1 118.5,522.7 117.3,522.7"/><polygon fill="#eab986" points="117.3,522.7 118.5,522.7 119.8,523.1 121.0,522.3 122.3,522.6 123.5,522.7 124.8,522.2 126.0,522.7 127.3,522.6 128.6,523.0 129.8,522.6 131.1,522.7 132.3,522.5 133.6,522.9 134.8,522.7 136.1,522.5 137.3,523.6 138.6,523.4 139.8,522.9 141.1,523.2 142.3,522.6 143.6,522.7 144.8,523.2 146.1,523.1 147.3,522.8 148.6,523.0 149.8,523.2 151.1,523.4 152.3,523.3 153.6,523.6 154.8,523.2 156.1,523.4 157.3,523.2 158.6,523.7 159.8,523.6 161.1,523.2 162.3,524.1 163.6,523.5 164.8,523.5 166.1,523.6 167.3,523.2 168.6,523.2 169.8,523.6 171.1,522.9 172.3,523.4 173.6,523.1 174.8,523.7 176.1,523.1 177.3,523.3 178.6,523.6 179.8,522.8 181.1,522.9 182.3,523.5 183.6,523.3 184.8,523.6 186.1,523.2 187.3,522.9 188.6,523.4 189.8,523.6 191.1,522.8 192.3,522.6 193.6,523.1 194.8,523.1 196.1,523.2 197.3,522.7 198.6,522.8 199.8,522.8 201.1,522.7 202.3,522.7 203.6,522.5 204.8,522.6 206.1,522.7 207.3,522.4 208.6,522.8 209.8,522.7 211.1,523.0 212.3,522.5 213.6,522.8 214.8,522.7 216.1,522.7 217.3,523.5 218.6,523.2 219.8,522.9 221.1,523.3 222.3,522.9 223.6,523.6 224.8,523.5 226.1,523.7 227.3,523.6 228.6,524.1 229.8,523.4 231.1,523.9 232.3,524.3 233.6,523.4 234.8,523.6 236.1,523.6 237.3,523.8 238.6,523.9 239.8,523.9 241.1,523.9 242.3,524.0 243.6,523.8 244.8,524.2 246.1,524.2 247.3,524.4 248.6,524.6 249.8,523.9 251.1,523.8 252.3,524.6 253.6,524.5 254.8,524.3 256.1,524.2 257.3,524.2 258.6,524.5 259.8,524.3 261.1,524.5 262.3,524.5 263.6,524.2 264.8,524.5 266.1,524.5 267.3,524.5 268.6,524.6 269.8,524.5 271.1,524.7 272.3,524.6 273.6,524.9 274.8,525.2 276.1,525.1 277.3,524.4 278.6,525.3 279.8,524.5 281.1,524.6 282.3,525.0 283.6,525.6 284.8,525.7 286.1,524.9 287.3,526.4 288.6,527.0 289.8,527.4 291.1,527.6 292.3,527.7 293.6,527.5 294.8,528.0 296.1,528.1 297.3,527.9 298.6,527.7 299.8,528.0 301.1,528.5 302.3,528.7 303.6,528.1 304.8,528.4 306.1,528.3 307.3,528.3 308.6,527.8 309.8,527.9 311.1,528.6 312.3,529.2 313.6,529.0 314.8,528.6 316.1,529.5 317.3,530.4 318.6,531.1 319.8,530.6 321.1,530.1 322.3,529.3 323.6,529.2 324.8,529.2 326.1,529.4 327.3,529.1 328.6,528.9 329.8,528.7 331.1,528.7 332.3,528.9 333.6,528.6 334.8,528.5 336.1,528.5 337.3,528.4 338.6,528.9 339.8,528.4 341.1,528.6 342.3,528.3 343.6,528.0 344.8,528.3 346.1,528.0 347.3,527.4 348.6,528.0 349.8,528.3 351.1,528.1 352.3,527.7 353.6,527.9 354.8,528.0 356.1,528.0 357.3,527.6 358.6,528.2 359.8,527.6 361.1,527.7 362.3,527.1 363.6,527.6 364.8,527.5 366.1,527.4 367.3,527.9 368.6,528.1 369.8,527.9 371.1,528.3 372.3,527.5 373.6,527.5 374.8,528.2 376.1,527.9 377.3,527.9 378.6,528.1 379.8,528.7 381.1,528.5 382.3,528.1 383.6,528.8 384.8,528.4 386.1,528.6 387.3,528.4 388.6,528.0 389.8,528.8 391.1,528.5 392.3,528.7 393.6,528.0 394.8,528.6 396.1,527.8 397.3,528.1 398.6,528.1 399.8,528.5 401.1,528.5 402.3,528.6 403.6,528.8 404.8,528.0 406.1,528.2 407.3,528.2 408.6,528.0 409.8,528.4 411.1,528.0 412.3,527.9 413.6,527.9 414.8,528.0 416.1,527.9 417.3,528.3 418.6,527.7 419.8,527.4 421.1,526.9 422.3,527.4 423.6,526.7 424.8,527.3 426.1,527.2 427.3,526.8 428.6,527.5 429.8,526.9 431.1,526.9 432.3,527.3 433.6,527.4 434.8,527.4 436.1,527.5 437.3,527.1 438.6,527.3 439.8,527.3 441.1,527.8 442.3,527.6 443.6,528.0 444.8,527.6 446.1,527.9 447.3,527.9 448.6,527.2 449.8,527.4 451.1,527.5 452.3,527.6 453.6,527.5 454.8,527.5 456.1,527.3 457.3,527.8 458.6,527.2 459.8,527.8 461.1,527.5 462.3,527.8 463.6,527.6 464.8,527.6 466.1,528.1 467.3,528.1 468.6,527.4 469.8,527.9 471.1,527.8 472.3,527.0 473.6,527.7 474.8,527.7 476.1,527.7 477.3,527.4 478.6,527.4 479.8,527.5 481.1,527.3 482.3,527.7 483.6,527.3 484.8,527.3 486.1,526.6 487.3,527.4 488.6,527.3 489.8,527.2 491.1,527.2 492.3,527.1 493.6,527.0 494.8,527.2 496.1,527.5 497.3,527.0 498.6,526.9 499.8,526.8 501.1,527.3 502.3,526.9 503.6,526.8 504.8,526.1 506.1,526.8 507.3,526.5 508.6,526.4 509.8,526.6 511.1,526.1 512.3,526.8 513.5,526.1 514.8,526.5 516.0,525.8 517.3,526.2 518.5,525.8 519.8,525.9 521.0,525.7 522.3,525.5 523.5,526.0 524.8,525.8 526.0,525.7 527.3,526.0 528.5,525.2 529.8,525.5 531.0,525.1 532.3,524.9 533.5,525.4 534.8,525.5 536.0,525.6 537.3,525.4 538.5,525.7 539.8,526.0 541.0,525.8 542.3,525.4 543.5,525.8 544.8,526.0 546.0,525.7 547.3,525.3 548.5,525.6 549.8,525.7 551.0,525.6 552.3,526.1 553.5,525.8 554.8,525.6 556.0,525.6 557.3,525.8 558.5,525.8 559.8,526.3 561.0,526.2 562.3,525.6 563.5,526.5 564.8,525.8 566.0,526.1 567.3,526.4 568.5,525.9 569.8,525.9 571.0,526.2 572.3,526.4 573.5,526.1 574.8,525.8 576.0,526.0 577.3,525.9 578.5,525.9 579.8,526.4 581.0,526.5 582.3,525.9 583.5,525.7 584.8,526.0 586.0,526.2 587.3,526.1 588.5,525.6 589.8,526.6 591.0,525.8 592.3,525.8 593.5,525.7 594.8,526.5 596.0,526.1 597.3,526.1 598.5,526.0 599.8,525.6 601.0,526.1 602.3,525.5 603.5,526.1 604.8,525.8 606.0,526.0 607.3,526.0 608.5,525.9 609.8,525.9 611.0,526.2 612.3,525.9 613.5,525.9 614.8,525.6 616.0,526.1 617.3,525.9 618.5,526.2 619.8,526.0 621.0,526.3 622.3,526.3 623.5,525.7 624.8,526.4 626.0,526.1 627.3,526.4 628.5,525.9 629.8,525.7 631.0,525.9 632.3,525.6 633.5,526.1 634.8,526.1 636.0,525.9 637.3,525.5 638.5,526.2 639.8,525.8 641.0,525.4 642.3,526.0 643.5,525.5 644.8,526.3 646.0,525.4 647.3,525.7 648.5,525.8 649.8,525.7 651.0,525.9 652.3,526.0 653.5,526.1 654.8,525.8 656.0,525.8 657.3,525.5 658.5,525.9 659.8,525.7 661.0,526.1 662.3,525.7 663.5,525.3 664.8,525.8 666.0,525.7 667.3,525.4 668.5,525.8 669.8,525.8 671.0,525.4 672.3,525.5 673.5,525.4 674.8,526.1 676.0,526.1 677.3,526.3 678.5,525.7 679.8,525.7 681.0,525.9 682.3,525.9 683.5,526.0 684.8,525.7 686.0,526.0 687.3,525.4 688.5,525.6 689.8,525.6 691.0,525.4 692.3,525.6 693.5,526.2 694.8,525.2 696.0,525.5 697.3,525.5 698.5,525.5 699.8,525.6 701.0,525.1 702.3,525.4 703.5,525.4 704.8,526.0 706.0,526.0 707.3,525.6 708.5,526.1 709.8,525.8 711.0,525.7 712.3,525.4 713.5,525.6 714.8,525.6 716.0,526.0 717.3,525.7 718.5,526.1 719.8,525.4 721.0,525.7 722.3,525.8 723.5,525.5 724.8,525.6 726.0,526.0 727.3,525.6 728.5,525.7 729.8,525.5 731.0,525.5 732.3,525.4 733.5,525.0 734.8,525.4 736.0,525.4 737.3,525.4 738.5,525.3 739.8,525.6 741.0,525.3 742.3,525.1 743.5,525.8 744.8,525.7 746.0,525.4 747.3,525.9 748.5,525.3 749.8,525.8 751.0,525.2 752.3,526.2 753.5,525.6 754.8,525.6 756.0,525.8 757.3,526.1 758.5,525.5 759.8,525.5 761.0,525.3 762.3,525.1 763.5,525.6 764.8,525.3 766.0,525.4 767.3,525.2 768.5,525.2 769.8,525.0 771.0,525.5 772.3,525.4 773.5,525.8 774.8,525.9 776.0,525.8 777.3,525.5 778.5,525.5 779.8,525.4 781.0,525.0 782.3,525.3 783.5,525.9 784.8,525.0 786.0,525.7 787.3,525.3 788.5,525.7 789.8,525.5 791.0,525.5 792.3,525.5 793.5,525.4 794.8,525.7 796.0,525.2 797.3,525.6 798.5,525.3 799.8,525.2 801.0,525.2 802.3,525.5 803.5,525.4 804.8,525.2 806.0,525.5 807.3,525.0 808.5,525.3 809.8,524.9 811.0,525.1 812.3,525.2 813.5,525.5 814.8,525.1 816.0,525.4 817.3,525.5 818.5,525.0 819.8,525.7 821.0,525.5 822.3,525.3 823.5,525.7 824.8,525.0 826.0,525.3 827.3,526.0 828.5,524.9 829.8,525.5 831.0,526.0 832.3,525.4 833.5,525.4 834.8,525.6 836.0,525.5 837.3,525.5 838.5,525.2 839.8,525.3 841.0,525.3 842.3,525.2 843.5,525.2 844.8,525.1 846.0,524.8 847.3,525.1 848.5,525.3 849.8,525.5 851.0,525.1 852.3,525.7 853.5,525.2 854.8,525.4 856.0,525.5 857.3,525.4 858.5,526.0 859.8,525.7 861.0,525.0 862.3,524.9 863.5,525.8 864.8,525.7 866.0,525.5 867.3,524.9 868.5,525.3 869.8,525.1 871.0,525.4 872.3,525.4 873.5,525.7 874.8,525.6 876.0,524.8 877.3,525.4 878.5,525.8 879.8,525.6 881.0,525.2 882.3,525.1 883.5,524.9 884.8,525.3 886.0,525.6 887.3,525.7 888.5,524.7 889.8,525.5 891.0,524.9 892.3,525.2 893.5,525.3 894.8,525.3 896.0,525.3 897.3,524.9 898.5,525.1 899.8,525.2 901.0,524.8 902.3,525.2 903.5,525.7 904.8,525.1 906.0,525.0 907.3,525.2 908.5,525.1 909.8,525.3 911.0,525.4 912.3,525.2 913.5,525.4 914.8,525.3 916.0,525.1 917.3,525.4 918.5,525.8 919.8,524.8 921.0,525.5 922.3,525.4 923.5,525.2 924.8,525.1 926.0,525.0 927.3,525.1 928.5,525.8 929.8,524.9 931.0,525.0 932.3,525.2 933.5,525.4 934.8,525.1 936.0,525.2 937.3,525.2 938.5,525.0 939.8,524.8 941.0,525.2 942.3,524.7 943.5,525.0 944.8,525.4 946.0,525.3 947.3,525.0 948.5,525.0 949.8,525.3 951.0,525.3 952.3,525.2 953.5,524.9 954.8,525.7 956.0,525.1 957.3,525.6 958.5,525.3 959.6,525.3 959.6,540.3 958.5,540.3 957.3,540.7 956.0,540.4 954.8,540.7 953.5,539.7 952.3,540.3 951.0,540.1 949.8,540.4 948.5,539.9 947.3,540.1 946.0,540.2 944.8,540.7 943.5,540.4 942.3,539.8 941.0,540.6 939.8,540.0 938.5,539.8 937.3,540.6 936.0,540.4 934.8,540.7 933.5,540.2 932.3,540.3 931.0,539.9 929.8,540.3 928.5,540.3 927.3,540.1 926.0,540.0 924.8,540.1 923.5,540.9 922.3,540.6 921.0,540.4 919.8,540.4 918.5,540.6 917.3,540.3 916.0,540.2 914.8,540.3 913.5,540.4 912.3,540.2 911.0,540.3 909.8,540.7 908.5,540.2 907.3,540.8 906.0,540.3 904.8,539.7 903.5,540.7 902.3,540.5 901.0,540.1 899.8,540.3 898.5,540.5 897.3,540.0 896.0,540.2 894.8,540.1 893.5,540.3 892.3,540.4 891.0,540.3 889.8,540.2 888.5,539.8 887.3,540.5 886.0,540.2 884.8,539.8 883.5,540.1 882.3,539.9 881.0,540.5 879.8,540.6 878.5,540.9 877.3,540.3 876.0,540.3 874.8,540.4 873.5,540.1 872.3,540.6 871.0,540.3 869.8,540.8 868.5,540.2 867.3,540.6 866.0,540.5 864.8,540.5 863.5,540.7 862.3,539.8 861.0,540.1 859.8,540.7 858.5,540.5 857.3,540.8 856.0,540.7 854.8,540.7 853.5,540.1 852.3,540.4 851.0,540.2 849.8,540.4 848.5,540.3 847.3,540.7 846.0,540.3 844.8,540.3 843.5,540.3 842.3,539.9 841.0,540.7 839.8,540.5 838.5,540.2 837.3,540.6 836.0,540.4 834.8,540.8 833.5,540.5 832.3,540.7 831.0,540.8 829.8,540.5 828.5,540.1 827.3,541.0 826.0,540.6 824.8,540.4 823.5,540.4 822.3,540.4 821.0,540.5 819.8,541.1 818.5,540.0 817.3,540.4 816.0,540.8 814.8,540.2 813.5,540.8 812.3,540.1 811.0,539.7 809.8,540.4 808.5,540.0 807.3,540.6 806.0,540.6 804.8,540.4 803.5,540.3 802.3,540.6 801.0,540.2 799.8,540.4 798.5,540.6 797.3,540.8 796.0,540.5 794.8,540.6 793.5,540.3 792.3,540.6 791.0,540.4 789.8,540.4 788.5,540.7 787.3,540.5 786.0,540.6 784.8,540.1 783.5,540.9 782.3,540.5 781.0,540.1 779.8,540.8 778.5,540.4 777.3,540.7 776.0,540.6 774.8,540.6 773.5,540.4 772.3,540.4 771.0,540.6 769.8,540.2 768.5,540.3 767.3,540.6 766.0,540.1 764.8,540.4 763.5,540.3 762.3,540.2 761.0,540.6 759.8,540.8 758.5,539.9 757.3,540.7 756.0,540.4 754.8,540.9 753.5,540.4 752.3,540.9 751.0,540.4 749.8,540.7 748.5,540.8 747.3,540.3 746.0,540.3 744.8,540.5 743.5,540.5 742.3,539.9 741.0,540.5 739.8,540.3 738.5,540.1 737.3,540.3 736.0,540.1 734.8,540.4 733.5,540.3 732.3,540.7 731.0,540.3 729.8,540.8 728.5,540.7 727.3,540.6 726.0,540.5 724.8,540.7 723.5,540.6 722.3,540.5 721.0,540.4 719.8,540.3 718.5,541.0 717.3,540.6 716.0,540.7 714.8,540.5 713.5,540.4 712.3,540.5 711.0,540.6 709.8,540.7 708.5,540.9 707.3,540.5 706.0,540.9 704.8,540.9 703.5,540.0 702.3,540.5 701.0,540.0 699.8,540.0 698.5,540.6 697.3,540.5 696.0,540.5 694.8,540.6 693.5,540.8 692.3,540.5 691.0,540.5 689.8,540.9 688.5,540.6 687.3,540.6 686.0,540.7 684.8,540.5 683.5,540.7 682.3,540.2 681.0,541.2 679.8,540.2 678.5,540.1 677.3,540.8 676.0,540.8 674.8,540.9 673.5,540.7 672.3,540.3 671.0,540.2 669.8,540.3 668.5,540.3 667.3,540.5 666.0,540.1 664.8,540.3 663.5,540.1 662.3,540.2 661.0,540.9 659.8,540.6 658.5,540.8 657.3,540.8 656.0,540.0 654.8,540.9 653.5,540.9 652.3,540.6 651.0,540.3 649.8,540.4 648.5,541.0 647.3,540.6 646.0,540.6 644.8,540.7 643.5,540.8 642.3,541.1 641.0,540.2 639.8,540.7 638.5,540.9 637.3,540.5 636.0,540.1 634.8,540.7 633.5,540.8 632.3,540.4 631.0,541.1 629.8,540.7 628.5,540.6 627.3,540.7 626.0,541.1 624.8,540.6 623.5,540.1 622.3,540.8 621.0,540.6 619.8,540.9 618.5,540.8 617.3,541.1 616.0,540.8 614.8,540.7 613.5,540.6 612.3,540.9 611.0,540.9 609.8,540.3 608.5,540.8 607.3,540.4 606.0,540.5 604.8,540.8 603.5,540.9 602.3,540.5 601.0,540.6 599.8,540.3 598.5,541.0 597.3,540.9 596.0,540.3 594.8,540.9 593.5,540.2 592.3,540.6 591.0,540.7 589.8,541.2 588.5,540.5 587.3,541.2 586.0,540.7 584.8,540.5 583.5,540.2 582.3,541.0 581.0,540.8 579.8,540.8 578.5,540.9 577.3,540.2 576.0,540.9 574.8,540.8 573.5,541.1 572.3,541.2 571.0,540.8 569.8,541.0 568.5,540.7 567.3,541.0 566.0,540.9 564.8,540.5 563.5,540.6 562.3,540.4 561.0,540.6 559.8,541.1 558.5,540.1 557.3,540.6 556.0,540.5 554.8,540.9 553.5,540.3 552.3,540.5 551.0,540.5 549.8,541.1 548.5,540.5 547.3,540.4 546.0,540.9 544.8,540.5 543.5,540.5 542.3,540.0 541.0,540.4 539.8,540.5 538.5,540.7 537.3,540.6 536.0,540.5 534.8,540.3 533.5,540.1 532.3,540.2 531.0,540.2 529.8,540.8 528.5,540.3 527.3,540.8 526.0,540.3 524.8,540.7 523.5,540.8 522.3,541.0 521.0,540.5 519.8,540.5 518.5,540.9 517.3,540.8 516.0,540.4 514.8,541.0 513.5,541.1 512.3,541.1 511.1,541.0 509.8,541.2 508.6,541.9 507.3,541.5 506.1,541.6 504.8,542.0 503.6,541.9 502.3,542.1 501.1,542.7 499.8,542.3 498.6,542.8 497.3,542.2 496.1,543.1 494.8,542.7 493.6,542.8 492.3,542.5 491.1,542.8 489.8,543.0 488.6,543.4 487.3,543.0 486.1,542.7 484.8,543.3 483.6,543.1 482.3,543.4 481.1,543.5 479.8,543.3 478.6,543.0 477.3,543.0 476.1,543.2 474.8,543.2 473.6,543.3 472.3,543.2 471.1,543.5 469.8,543.9 468.6,542.9 467.3,543.3 466.1,543.3 464.8,543.3 463.6,543.2 462.3,543.0 461.1,542.9 459.8,543.2 458.6,543.2 457.3,542.6 456.1,543.1 454.8,543.4 453.6,542.7 452.3,542.5 451.1,542.9 449.8,542.9 448.6,542.6 447.3,543.2 446.1,543.3 444.8,542.8 443.6,542.8 442.3,542.6 441.1,542.3 439.8,542.6 438.6,542.4 437.3,542.3 436.1,542.0 434.8,542.2 433.6,541.7 432.3,541.9 431.1,542.2 429.8,541.8 428.6,542.4 427.3,541.9 426.1,542.0 424.8,542.1 423.6,541.4 422.3,542.2 421.1,541.8 419.8,541.7 418.6,542.3 417.3,542.6 416.1,542.6 414.8,542.9 413.6,542.7 412.3,542.7 411.1,542.9 409.8,542.9 408.6,543.2 407.3,543.2 406.1,543.1 404.8,543.0 403.6,543.1 402.3,542.9 401.1,543.5 399.8,543.3 398.6,542.7 397.3,542.9 396.1,542.6 394.8,543.2 393.6,543.1 392.3,543.3 391.1,542.9 389.8,542.7 388.6,543.0 387.3,542.2 386.1,542.7 384.8,542.6 383.6,542.6 382.3,542.8 381.1,542.7 379.8,543.1 378.6,542.4 377.3,542.2 376.1,542.6 374.8,542.6 373.6,542.1 372.3,542.5 371.1,543.0 369.8,542.3 368.6,542.3 367.3,542.9 366.1,542.5 364.8,542.2 363.6,542.3 362.3,542.3 361.1,542.4 359.8,541.8 358.6,542.3 357.3,542.4 356.1,542.0 354.8,542.4 353.6,542.4 352.3,542.6 351.1,542.8 349.8,542.7 348.6,542.5 347.3,542.1 346.1,542.5 344.8,543.1 343.6,542.6 342.3,543.0 341.1,542.8 339.8,543.4 338.6,543.1 337.3,543.0 336.1,543.7 334.8,543.5 333.6,543.3 332.3,543.0 331.1,543.5 329.8,544.0 328.6,543.5 327.3,543.8 326.1,544.1 324.8,543.9 323.6,544.0 322.3,543.7 321.1,544.9 319.8,545.7 318.6,546.4 317.3,545.3 316.1,544.3 314.8,542.9 313.6,543.8 312.3,543.6 311.1,543.6 309.8,542.4 308.6,542.3 307.3,542.8 306.1,543.0 304.8,542.9 303.6,542.8 302.3,543.1 301.1,543.1 299.8,542.2 298.6,542.0 297.3,543.0 296.1,542.8 294.8,542.1 293.6,542.0 292.3,542.9 291.1,542.5 289.8,542.1 288.6,542.7 287.3,540.9 286.1,538.9 284.8,539.0 283.6,539.1 282.3,538.7 281.1,538.1 279.8,538.5 278.6,538.8 277.3,538.4 276.1,538.4 274.8,538.6 273.6,538.7 272.3,538.0 271.1,538.0 269.8,537.6 268.6,537.9 267.3,537.6 266.1,537.9 264.8,537.8 263.6,537.8 262.3,537.7 261.1,538.0 259.8,537.4 258.6,538.1 257.3,537.5 256.1,537.3 254.8,537.2 253.6,537.7 252.3,537.5 251.1,537.2 249.8,536.9 248.6,537.6 247.3,537.6 246.1,537.5 244.8,537.7 243.6,537.5 242.3,537.1 241.1,536.8 239.8,536.6 238.6,537.2 237.3,536.4 236.1,536.9 234.8,536.6 233.6,537.0 232.3,536.7 231.1,536.6 229.8,536.2 228.6,537.3 227.3,536.0 226.1,536.7 224.8,537.0 223.6,536.1 222.3,536.5 221.1,536.4 219.8,536.0 218.6,536.5 217.3,536.5 216.1,536.2 214.8,536.0 213.6,535.8 212.3,535.6 211.1,535.8 209.8,535.8 208.6,535.8 207.3,535.8 206.1,535.3 204.8,535.5 203.6,535.6 202.3,536.2 201.1,535.5 199.8,535.4 198.6,535.7 197.3,535.5 196.1,536.0 194.8,536.4 193.6,536.0 192.3,535.3 191.1,536.0 189.8,536.1 188.6,535.9 187.3,535.5 186.1,535.7 184.8,536.3 183.6,535.8 182.3,536.2 181.1,535.7 179.8,535.6 178.6,536.4 177.3,536.1 176.1,535.9 174.8,536.3 173.6,536.3 172.3,536.7 171.1,535.8 169.8,536.3 168.6,536.5 167.3,536.1 166.1,536.7 164.8,536.9 163.6,537.0 162.3,536.7 161.1,536.3 159.8,536.0 158.6,536.4 157.3,536.2 156.1,536.1 154.8,536.0 153.6,536.6 152.3,535.8 151.1,536.2 149.8,535.9 148.6,536.1 147.3,535.5 146.1,535.5 144.8,536.0 143.6,535.6 142.3,535.8 141.1,535.7 139.8,536.3 138.6,536.1 137.3,536.0 136.1,535.8 134.8,535.8 133.6,536.1 132.3,535.6 131.1,536.0 129.8,535.9 128.6,536.1 127.3,536.1 126.0,535.9 124.8,535.8 123.5,535.9 122.3,536.1 121.0,535.6 119.8,536.0 118.5,536.0 117.3,536.0"/><polygon fill="#ec7d63" points="117.3,536.0 118.5,536.0 119.8,536.0 121.0,535.6 122.3,536.1 123.5,535.9 124.8,535.8 126.0,535.9 127.3,536.1 128.6,536.1 129.8,535.9 131.1,536.0 132.3,535.6 133.6,536.1 134.8,535.8 136.1,535.8 137.3,536.0 138.6,536.1 139.8,536.3 141.1,535.7 142.3,535.8 143.6,535.6 144.8,536.0 146.1,535.5 147.3,535.5 148.6,536.1 149.8,535.9 151.1,536.2 152.3,535.8 153.6,536.6 154.8,536.0 156.1,536.1 157.3,536.2 158.6,536.4 159.8,536.0 161.1,536.3 162.3,536.7 163.6,537.0 164.8,536.9 166.1,536.7 167.3,536.1 168.6,536.5 169.8,536.3 171.1,535.8 172.3,536.7 173.6,536.3 174.8,536.3 176.1,535.9 177.3,536.1 178.6,536.4 179.8,535.6 181.1,535.7 182.3,536.2 183.6,535.8 184.8,536.3 186.1,535.7 187.3,535.5 188.6,535.9 189.8,536.1 191.1,536.0 192.3,535.3 193.6,536.0 194.8,536.4 196.1,536.0 197.3,535.5 198.6,535.7 199.8,535.4 201.1,535.5 202.3,536.2 203.6,535.6 204.8,535.5 206.1,535.3 207.3,535.8 208.6,535.8 209.8,535.8 211.1,535.8 212.3,535.6 213.6,535.8 214.8,536.0 216.1,536.2 217.3,536.5 218.6,536.5 219.8,536.0 221.1,536.4 222.3,536.5 223.6,536.1 224.8,537.0 226.1,536.7 227.3,536.0 228.6,537.3 229.8,536.2 231.1,536.6 232.3,536.7 233.6,537.0 234.8,536.6 236.1,536.9 237.3,536.4 238.6,537.2 239.8,536.6 241.1,536.8 242.3,537.1 243.6,537.5 244.8,537.7 246.1,537.5 247.3,537.6 248.6,537.6 249.8,536.9 251.1,537.2 252.3,537.5 253.6,537.7 254.8,537.2 256.1,537.3 257.3,537.5 258.6,538.1 259.8,537.4 261.1,538.0 262.3,537.7 263.6,537.8 264.8,537.8 266.1,537.9 267.3,537.6 268.6,537.9 269.8,537.6 271.1,538.0 272.3,538.0 273.6,538.7 274.8,538.6 276.1,538.4 277.3,538.4 278.6,538.8 279.8,538.5 281.1,538.1 282.3,538.7 283.6,539.1 284.8,539.0 286.1,538.9 287.3,540.9 288.6,542.7 289.8,542.1 291.1,542.5 292.3,542.9 293.6,542.0 294.8,542.1 296.1,542.8 297.3,543.0 298.6,542.0 299.8,542.2 301.1,543.1 302.3,543.1 303.6,542.8 304.8,542.9 306.1,543.0 307.3,542.8 308.6,542.3 309.8,542.4 311.1,543.6 312.3,543.6 313.6,543.8 314.8,542.9 316.1,544.3 317.3,545.3 318.6,546.4 319.8,545.7 321.1,544.9 322.3,543.7 323.6,544.0 324.8,543.9 326.1,544.1 327.3,543.8 328.6,543.5 329.8,544.0 331.1,543.5 332.3,543.0 333.6,543.3 334.8,543.5 336.1,543.7 337.3,543.0 338.6,543.1 339.8,543.4 341.1,542.8 342.3,543.0 343.6,542.6 344.8,543.1 346.1,542.5 347.3,542.1 348.6,542.5 349.8,542.7 351.1,542.8 352.3,542.6 353.6,542.4 354.8,542.4 356.1,542.0 357.3,542.4 358.6,542.3 359.8,541.8 361.1,542.4 362.3,542.3 363.6,542.3 364.8,542.2 366.1,542.5 367.3,542.9 368.6,542.3 369.8,542.3 371.1,543.0 372.3,542.5 373.6,542.1 374.8,542.6 376.1,542.6 377.3,542.2 378.6,542.4 379.8,543.1 381.1,542.7 382.3,542.8 383.6,542.6 384.8,542.6 386.1,542.7 387.3,542.2 388.6,543.0 389.8,542.7 391.1,542.9 392.3,543.3 393.6,543.1 394.8,543.2 396.1,542.6 397.3,542.9 398.6,542.7 399.8,543.3 401.1,543.5 402.3,542.9 403.6,543.1 404.8,543.0 406.1,543.1 407.3,543.2 408.6,543.2 409.8,542.9 411.1,542.9 412.3,542.7 413.6,542.7 414.8,542.9 416.1,542.6 417.3,542.6 418.6,542.3 419.8,541.7 421.1,541.8 422.3,542.2 423.6,541.4 424.8,542.1 426.1,542.0 427.3,541.9 428.6,542.4 429.8,541.8 431.1,542.2 432.3,541.9 433.6,541.7 434.8,542.2 436.1,542.0 437.3,542.3 438.6,542.4 439.8,542.6 441.1,542.3 442.3,542.6 443.6,542.8 444.8,542.8 446.1,543.3 447.3,543.2 448.6,542.6 449.8,542.9 451.1,542.9 452.3,542.5 453.6,542.7 454.8,543.4 456.1,543.1 457.3,542.6 458.6,543.2 459.8,543.2 461.1,542.9 462.3,543.0 463.6,543.2 464.8,543.3 466.1,543.3 467.3,543.3 468.6,542.9 469.8,543.9 471.1,543.5 472.3,543.2 473.6,543.3 474.8,543.2 476.1,543.2 477.3,543.0 478.6,543.0 479.8,543.3 481.1,543.5 482.3,543.4 483.6,543.1 484.8,543.3 486.1,542.7 487.3,543.0 488.6,543.4 489.8,543.0 491.1,542.8 492.3,542.5 493.6,542.8 494.8,542.7 496.1,543.1 497.3,542.2 498.6,542.8 499.8,542.3 501.1,542.7 502.3,542.1 503.6,541.9 504.8,542.0 506.1,541.6 507.3,541.5 508.6,541.9 509.8,541.2 511.1,541.0 512.3,541.1 513.5,541.1 514.8,541.0 516.0,540.4 517.3,540.8 518.5,540.9 519.8,540.5 521.0,540.5 522.3,541.0 523.5,540.8 524.8,540.7 526.0,540.3 527.3,540.8 528.5,540.3 529.8,540.8 531.0,540.2 532.3,540.2 533.5,540.1 534.8,540.3 536.0,540.5 537.3,540.6 538.5,540.7 539.8,540.5 541.0,540.4 542.3,540.0 543.5,540.5 544.8,540.5 546.0,540.9 547.3,540.4 548.5,540.5 549.8,541.1 551.0,540.5 552.3,540.5 553.5,540.3 554.8,540.9 556.0,540.5 557.3,540.6 558.5,540.1 559.8,541.1 561.0,540.6 562.3,540.4 563.5,540.6 564.8,540.5 566.0,540.9 567.3,541.0 568.5,540.7 569.8,541.0 571.0,540.8 572.3,541.2 573.5,541.1 574.8,540.8 576.0,540.9 577.3,540.2 578.5,540.9 579.8,540.8 581.0,540.8 582.3,541.0 583.5,540.2 584.8,540.5 586.0,540.7 587.3,541.2 588.5,540.5 589.8,541.2 591.0,540.7 592.3,540.6 593.5,540.2 594.8,540.9 596.0,540.3 597.3,540.9 598.5,541.0 599.8,540.3 601.0,540.6 602.3,540.5 603.5,540.9 604.8,540.8 606.0,540.5 607.3,540.4 608.5,540.8 609.8,540.3 611.0,540.9 612.3,540.9 613.5,540.6 614.8,540.7 616.0,540.8 617.3,541.1 618.5,540.8 619.8,540.9 621.0,540.6 622.3,540.8 623.5,540.1 624.8,540.6 626.0,541.1 627.3,540.7 628.5,540.6 629.8,540.7 631.0,541.1 632.3,540.4 633.5,540.8 634.8,540.7 636.0,540.1 637.3,540.5 638.5,540.9 639.8,540.7 641.0,540.2 642.3,541.1 643.5,540.8 644.8,540.7 646.0,540.6 647.3,540.6 648.5,541.0 649.8,540.4 651.0,540.3 652.3,540.6 653.5,540.9 654.8,540.9 656.0,540.0 657.3,540.8 658.5,540.8 659.8,540.6 661.0,540.9 662.3,540.2 663.5,540.1 664.8,540.3 666.0,540.1 667.3,540.5 668.5,540.3 669.8,540.3 671.0,540.2 672.3,540.3 673.5,540.7 674.8,540.9 676.0,540.8 677.3,540.8 678.5,540.1 679.8,540.2 681.0,541.2 682.3,540.2 683.5,540.7 684.8,540.5 686.0,540.7 687.3,540.6 688.5,540.6 689.8,540.9 691.0,540.5 692.3,540.5 693.5,540.8 694.8,540.6 696.0,540.5 697.3,540.5 698.5,540.6 699.8,540.0 701.0,540.0 702.3,540.5 703.5,540.0 704.8,540.9 706.0,540.9 707.3,540.5 708.5,540.9 709.8,540.7 711.0,540.6 712.3,540.5 713.5,540.4 714.8,540.5 716.0,540.7 717.3,540.6 718.5,541.0 719.8,540.3 721.0,540.4 722.3,540.5 723.5,540.6 724.8,540.7 726.0,540.5 727.3,540.6 728.5,540.7 729.8,540.8 731.0,540.3 732.3,540.7 733.5,540.3 734.8,540.4 736.0,540.1 737.3,540.3 738.5,540.1 739.8,540.3 741.0,540.5 742.3,539.9 743.5,540.5 744.8,540.5 746.0,540.3 747.3,540.3 748.5,540.8 749.8,540.7 751.0,540.4 752.3,540.9 753.5,540.4 754.8,540.9 756.0,540.4 757.3,540.7 758.5,539.9 759.8,540.8 761.0,540.6 762.3,540.2 763.5,540.3 764.8,540.4 766.0,540.1 767.3,540.6 768.5,540.3 769.8,540.2 771.0,540.6 772.3,540.4 773.5,540.4 774.8,540.6 776.0,540.6 777.3,540.7 778.5,540.4 779.8,540.8 781.0,540.1 782.3,540.5 783.5,540.9 784.8,540.1 786.0,540.6 787.3,540.5 788.5,540.7 789.8,540.4 791.0,540.4 792.3,540.6 793.5,540.3 794.8,540.6 796.0,540.5 797.3,540.8 798.5,540.6 799.8,540.4 801.0,540.2 802.3,540.6 803.5,540.3 804.8,540.4 806.0,540.6 807.3,540.6 808.5,540.0 809.8,540.4 811.0,539.7 812.3,540.1 813.5,540.8 814.8,540.2 816.0,540.8 817.3,540.4 818.5,540.0 819.8,541.1 821.0,540.5 822.3,540.4 823.5,540.4 824.8,540.4 826.0,540.6 827.3,541.0 828.5,540.1 829.8,540.5 831.0,540.8 832.3,540.7 833.5,540.5 834.8,540.8 836.0,540.4 837.3,540.6 838.5,540.2 839.8,540.5 841.0,540.7 842.3,539.9 843.5,540.3 844.8,540.3 846.0,540.3 847.3,540.7 848.5,540.3 849.8,540.4 851.0,540.2 852.3,540.4 853.5,540.1 854.8,540.7 856.0,540.7 857.3,540.8 858.5,540.5 859.8,540.7 861.0,540.1 862.3,539.8 863.5,540.7 864.8,540.5 866.0,540.5 867.3,540.6 868.5,540.2 869.8,540.8 871.0,540.3 872.3,540.6 873.5,540.1 874.8,540.4 876.0,540.3 877.3,540.3 878.5,540.9 879.8,540.6 881.0,540.5 882.3,539.9 883.5,540.1 884.8,539.8 886.0,540.2 887.3,540.5 888.5,539.8 889.8,540.2 891.0,540.3 892.3,540.4 893.5,540.3 894.8,540.1 896.0,540.2 897.3,540.0 898.5,540.5 899.8,540.3 901.0,540.1 902.3,540.5 903.5,540.7 904.8,539.7 906.0,540.3 907.3,540.8 908.5,540.2 909.8,540.7 911.0,540.3 912.3,540.2 913.5,540.4 914.8,540.3 916.0,540.2 917.3,540.3 918.5,540.6 919.8,540.4 921.0,540.4 922.3,540.6 923.5,540.9 924.8,540.1 926.0,540.0 927.3,540.1 928.5,540.3 929.8,540.3 931.0,539.9 932.3,540.3 933.5,540.2 934.8,540.7 936.0,540.4 937.3,540.6 938.5,539.8 939.8,540.0 941.0,540.6 942.3,539.8 943.5,540.4 944.8,540.7 946.0,540.2 947.3,540.1 948.5,539.9 949.8,540.4 951.0,540.1 952.3,540.3 953.5,539.7 954.8,540.7 956.0,540.4 957.3,540.7 958.5,540.3 959.6,540.3 959.6,552.3 958.5,552.4 957.3,552.3 956.0,551.8 954.8,551.9 953.5,551.6 952.3,551.9 951.0,552.4 949.8,551.8 948.5,551.5 947.3,552.2 946.0,552.3 944.8,552.6 943.5,551.9 942.3,551.7 941.0,552.1 939.8,551.6 938.5,551.8 937.3,552.5 936.0,552.2 934.8,552.0 933.5,552.2 932.3,552.4 931.0,551.8 929.8,551.7 928.5,552.1 927.3,552.0 926.0,551.8 924.8,552.4 923.5,552.2 922.3,552.6 921.0,552.5 919.8,552.1 918.5,552.8 917.3,552.4 916.0,551.9 914.8,552.5 913.5,551.9 912.3,552.0 911.0,551.9 909.8,552.2 908.5,552.4 907.3,552.5 906.0,551.7 904.8,551.6 903.5,552.1 902.3,552.5 901.0,552.2 899.8,551.7 898.5,552.3 897.3,551.7 896.0,551.9 894.8,551.9 893.5,552.2 892.3,552.1 891.0,551.9 889.8,551.9 888.5,551.7 887.3,552.1 886.0,552.0 884.8,551.7 883.5,552.1 882.3,552.1 881.0,552.4 879.8,552.1 878.5,552.2 877.3,551.9 876.0,551.9 874.8,552.0 873.5,552.0 872.3,552.3 871.0,552.1 869.8,552.4 868.5,552.1 867.3,552.0 866.0,552.2 864.8,552.3 863.5,552.4 862.3,551.8 861.0,552.2 859.8,552.5 858.5,552.6 857.3,552.3 856.0,552.1 854.8,552.1 853.5,552.1 852.3,552.5 851.0,552.3 849.8,552.0 848.5,552.1 847.3,551.9 846.0,551.7 844.8,552.5 843.5,552.1 842.3,552.2 841.0,551.9 839.8,552.6 838.5,552.1 837.3,552.0 836.0,552.3 834.8,552.8 833.5,552.5 832.3,552.0 831.0,552.6 829.8,552.2 828.5,551.8 827.3,552.3 826.0,551.9 824.8,552.3 823.5,552.3 822.3,551.9 821.0,552.3 819.8,552.6 818.5,551.8 817.3,552.5 816.0,552.5 814.8,552.3 813.5,552.2 812.3,551.7 811.0,552.2 809.8,551.7 808.5,551.9 807.3,551.7 806.0,552.6 804.8,552.3 803.5,552.1 802.3,552.5 801.0,551.9 799.8,552.2 798.5,552.3 797.3,552.2 796.0,552.0 794.8,552.9 793.5,551.7 792.3,552.0 791.0,552.0 789.8,551.7 788.5,552.4 787.3,552.2 786.0,552.6 784.8,552.0 783.5,552.6 782.3,552.3 781.0,551.9 779.8,552.5 778.5,552.1 777.3,552.7 776.0,552.5 774.8,552.5 773.5,552.3 772.3,552.5 771.0,552.8 769.8,552.3 768.5,552.0 767.3,552.5 766.0,551.8 764.8,551.9 763.5,551.9 762.3,551.8 761.0,552.5 759.8,552.0 758.5,552.1 757.3,552.3 756.0,552.5 754.8,552.7 753.5,552.6 752.3,552.5 751.0,552.5 749.8,552.2 748.5,552.3 747.3,552.0 746.0,552.0 744.8,552.4 743.5,552.5 742.3,551.7 741.0,552.4 739.8,552.6 738.5,551.9 737.3,551.7 736.0,552.0 734.8,552.0 733.5,552.2 732.3,552.5 731.0,551.9 729.8,552.6 728.5,552.3 727.3,552.4 726.0,552.4 724.8,552.3 723.5,552.2 722.3,552.4 721.0,552.7 719.8,552.3 718.5,552.8 717.3,551.9 716.0,552.2 714.8,552.9 713.5,552.4 712.3,552.1 711.0,552.0 709.8,552.3 708.5,552.4 707.3,552.7 706.0,552.7 704.8,552.3 703.5,551.8 702.3,552.1 701.0,552.2 699.8,552.0 698.5,552.5 697.3,552.6 696.0,552.5 694.8,552.3 693.5,552.4 692.3,552.4 691.0,552.1 689.8,552.3 688.5,552.2 687.3,552.2 686.0,552.4 684.8,552.1 683.5,552.8 682.3,552.6 681.0,552.7 679.8,552.2 678.5,552.1 677.3,552.7 676.0,552.8 674.8,552.3 673.5,552.2 672.3,552.5 671.0,551.9 669.8,552.3 668.5,552.3 667.3,552.5 666.0,552.0 664.8,552.3 663.5,551.8 662.3,551.9 661.0,552.2 659.8,552.3 658.5,552.7 657.3,552.5 656.0,552.1 654.8,552.6 653.5,552.9 652.3,552.7 651.0,551.9 649.8,551.9 648.5,552.6 647.3,552.1 646.0,552.4 644.8,552.9 643.5,552.4 642.3,552.4 641.0,552.1 639.8,551.9 638.5,552.8 637.3,552.5 636.0,552.3 634.8,552.6 633.5,552.8 632.3,552.5 631.0,553.0 629.8,552.0 628.5,552.4 627.3,552.5 626.0,552.9 624.8,552.5 623.5,552.2 622.3,552.8 621.0,552.2 619.8,552.5 618.5,552.7 617.3,552.8 616.0,552.5 614.8,552.3 613.5,551.9 612.3,552.2 611.0,552.6 609.8,552.1 608.5,552.3 607.3,552.8 606.0,551.9 604.8,552.4 603.5,552.4 602.3,552.0 601.0,552.8 599.8,551.9 598.5,552.7 597.3,552.7 596.0,552.1 594.8,552.4 593.5,552.3 592.3,552.5 591.0,551.8 589.8,552.5 588.5,552.5 587.3,552.7 586.0,552.4 584.8,552.2 583.5,552.6 582.3,552.6 581.0,552.7 579.8,552.5 578.5,552.2 577.3,552.4 576.0,552.2 574.8,552.3 573.5,552.5 572.3,553.2 571.0,552.3 569.8,552.5 568.5,552.1 567.3,552.6 566.0,552.7 564.8,552.4 563.5,552.8 562.3,552.3 561.0,552.4 559.8,552.6 558.5,552.2 557.3,552.8 556.0,552.5 554.8,552.4 553.5,551.8 552.3,552.0 551.0,552.3 549.8,552.6 548.5,552.6 547.3,551.9 546.0,552.5 544.8,552.1 543.5,552.0 542.3,552.1 541.0,552.3 539.8,552.1 538.5,552.3 537.3,552.2 536.0,552.3 534.8,551.8 533.5,551.9 532.3,551.9 531.0,551.6 529.8,552.1 528.5,551.5 527.3,552.0 526.0,552.2 524.8,552.2 523.5,551.8 522.3,552.0 521.0,551.4 519.8,551.6 518.5,552.0 517.3,551.8 516.0,551.6 514.8,552.5 513.5,551.8 512.3,552.6 511.1,552.5 509.8,552.7 508.6,553.2 507.3,553.2 506.1,553.0 504.8,552.6 503.6,552.9 502.3,553.2 501.1,554.0 499.8,553.4 498.6,553.7 497.3,553.7 496.1,553.7 494.8,553.9 493.6,553.6 492.3,553.3 491.1,554.0 489.8,553.7 488.6,554.4 487.3,554.3 486.1,553.5 484.8,554.2 483.6,554.0 482.3,554.6 481.1,554.3 479.8,554.5 478.6,554.3 477.3,554.3 476.1,555.1 474.8,554.9 473.6,554.7 472.3,554.4 471.1,554.7 469.8,555.3 468.6,554.2 467.3,555.1 466.1,555.3 464.8,554.5 463.6,554.7 462.3,554.4 461.1,554.3 459.8,554.4 458.6,554.4 457.3,554.4 456.1,554.1 454.8,554.9 453.6,554.2 452.3,554.2 451.1,554.1 449.8,554.2 448.6,554.5 447.3,554.7 446.1,554.6 444.8,554.3 443.6,554.5 442.3,554.2 441.1,554.0 439.8,554.4 438.6,553.6 437.3,554.1 436.1,553.7 434.8,554.4 433.6,553.7 432.3,553.8 431.1,554.2 429.8,553.8 428.6,554.5 427.3,554.3 426.1,554.3 424.8,554.2 423.6,554.0 422.3,554.7 421.1,554.0 419.8,553.9 418.6,554.6 417.3,554.9 416.1,555.1 414.8,554.1 413.6,554.8 412.3,555.0 411.1,554.6 409.8,554.4 408.6,554.9 407.3,554.9 406.1,554.7 404.8,554.7 403.6,554.8 402.3,554.6 401.1,554.5 399.8,555.1 398.6,554.7 397.3,554.2 396.1,554.5 394.8,554.5 393.6,554.1 392.3,555.0 391.1,554.7 389.8,554.5 388.6,554.4 387.3,554.4 386.1,554.1 384.8,554.1 383.6,554.3 382.3,554.3 381.1,554.0 379.8,554.4 378.6,553.8 377.3,553.9 376.1,554.2 374.8,553.6 373.6,553.5 372.3,553.8 371.1,553.9 369.8,553.7 368.6,553.9 367.3,553.7 366.1,553.3 364.8,553.5 363.6,553.6 362.3,553.0 361.1,553.4 359.8,553.5 358.6,553.8 357.3,553.7 356.1,553.2 354.8,553.3 353.6,553.3 352.3,554.0 351.1,553.5 349.8,553.7 348.6,553.6 347.3,553.3 346.1,554.2 344.8,553.7 343.6,554.1 342.3,554.3 341.1,554.4 339.8,554.6 338.6,554.7 337.3,554.3 336.1,554.5 334.8,554.5 333.6,555.0 332.3,554.3 331.1,555.2 329.8,554.8 328.6,554.9 327.3,555.2 326.1,555.6 324.8,555.4 323.6,555.3 322.3,554.9 321.1,556.7 319.8,556.8 318.6,557.6 317.3,556.8 316.1,556.1 314.8,555.4 313.6,555.2 312.3,554.9 311.1,555.2 309.8,554.4 308.6,554.4 307.3,554.0 306.1,554.6 304.8,554.7 303.6,554.3 302.3,554.6 301.1,554.6 299.8,554.4 298.6,554.1 297.3,554.5 296.1,554.0 294.8,553.8 293.6,553.6 292.3,553.8 291.1,554.0 289.8,554.0 288.6,553.6 287.3,552.4 286.1,551.2 284.8,551.0 283.6,550.8 282.3,550.8 281.1,550.2 279.8,550.3 278.6,550.4 277.3,550.0 276.1,549.6 274.8,550.3 273.6,550.1 272.3,549.6 271.1,549.5 269.8,549.5 268.6,549.6 267.3,548.9 266.1,549.4 264.8,549.2 263.6,549.1 262.3,549.1 261.1,549.2 259.8,548.6 258.6,549.6 257.3,548.8 256.1,548.4 254.8,548.9 253.6,549.2 252.3,549.3 251.1,548.3 249.8,548.6 248.6,548.6 247.3,548.7 246.1,548.9 244.8,548.7 243.6,548.6 242.3,548.0 241.1,548.3 239.8,548.3 238.6,548.2 237.3,547.6 236.1,548.0 234.8,548.1 233.6,547.9 232.3,548.3 231.1,547.8 229.8,547.6 228.6,548.4 227.3,547.9 226.1,547.9 224.8,547.8 223.6,547.7 222.3,547.6 221.1,548.1 219.8,547.4 218.6,548.1 217.3,547.9 216.1,547.0 214.8,547.3 213.6,547.2 212.3,546.8 211.1,547.0 209.8,547.3 208.6,547.0 207.3,547.2 206.1,547.0 204.8,547.3 203.6,546.7 202.3,547.3 201.1,546.8 199.8,547.1 198.6,546.7 197.3,546.5 196.1,547.5 194.8,547.8 193.6,547.4 192.3,547.1 191.1,547.1 189.8,547.3 188.6,547.3 187.3,547.1 186.1,547.3 184.8,547.7 183.6,547.5 182.3,547.8 181.1,546.9 179.8,546.8 178.6,547.7 177.3,547.9 176.1,547.0 174.8,547.5 173.6,547.0 172.3,547.4 171.1,547.4 169.8,547.5 168.6,547.3 167.3,547.4 166.1,547.6 164.8,547.7 163.6,547.7 162.3,547.7 161.1,547.3 159.8,547.5 158.6,547.6 157.3,547.5 156.1,547.6 154.8,547.6 153.6,547.4 152.3,547.3 151.1,547.2 149.8,547.2 148.6,546.8 147.3,546.9 146.1,547.0 144.8,547.1 143.6,546.5 142.3,546.8 141.1,547.1 139.8,547.1 138.6,547.4 137.3,547.4 136.1,546.9 134.8,547.2 133.6,547.4 132.3,546.8 131.1,547.2 129.8,547.0 128.6,547.2 127.3,547.1 126.0,547.3 124.8,546.6 123.5,547.0 122.3,546.9 121.0,547.4 119.8,547.6 118.5,547.6 117.3,547.1"/><polygon fill="#50aecb" points="117.3,547.1 118.5,547.6 119.8,547.6 121.0,547.4 122.3,546.9 123.5,547.0 124.8,546.6 126.0,547.3 127.3,547.1 128.6,547.2 129.8,547.0 131.1,547.2 132.3,546.8 133.6,547.4 134.8,547.2 136.1,546.9 137.3,547.4 138.6,547.4 139.8,547.1 141.1,547.1 142.3,546.8 143.6,546.5 144.8,547.1 146.1,547.0 147.3,546.9 148.6,546.8 149.8,547.2 151.1,547.2 152.3,547.3 153.6,547.4 154.8,547.6 156.1,547.6 157.3,547.5 158.6,547.6 159.8,547.5 161.1,547.3 162.3,547.7 163.6,547.7 164.8,547.7 166.1,547.6 167.3,547.4 168.6,547.3 169.8,547.5 171.1,547.4 172.3,547.4 173.6,547.0 174.8,547.5 176.1,547.0 177.3,547.9 178.6,547.7 179.8,546.8 181.1,546.9 182.3,547.8 183.6,547.5 184.8,547.7 186.1,547.3 187.3,547.1 188.6,547.3 189.8,547.3 191.1,547.1 192.3,547.1 193.6,547.4 194.8,547.8 196.1,547.5 197.3,546.5 198.6,546.7 199.8,547.1 201.1,546.8 202.3,547.3 203.6,546.7 204.8,547.3 206.1,547.0 207.3,547.2 208.6,547.0 209.8,547.3 211.1,547.0 212.3,546.8 213.6,547.2 214.8,547.3 216.1,547.0 217.3,547.9 218.6,548.1 219.8,547.4 221.1,548.1 222.3,547.6 223.6,547.7 224.8,547.8 226.1,547.9 227.3,547.9 228.6,548.4 229.8,547.6 231.1,547.8 232.3,548.3 233.6,547.9 234.8,548.1 236.1,548.0 237.3,547.6 238.6,548.2 239.8,548.3 241.1,548.3 242.3,548.0 243.6,548.6 244.8,548.7 246.1,548.9 247.3,548.7 248.6,548.6 249.8,548.6 251.1,548.3 252.3,549.3 253.6,549.2 254.8,548.9 256.1,548.4 257.3,548.8 258.6,549.6 259.8,548.6 261.1,549.2 262.3,549.1 263.6,549.1 264.8,549.2 266.1,549.4 267.3,548.9 268.6,549.6 269.8,549.5 271.1,549.5 272.3,549.6 273.6,550.1 274.8,550.3 276.1,549.6 277.3,550.0 278.6,550.4 279.8,550.3 281.1,550.2 282.3,550.8 283.6,550.8 284.8,551.0 286.1,551.2 287.3,552.4 288.6,553.6 289.8,554.0 291.1,554.0 292.3,553.8 293.6,553.6 294.8,553.8 296.1,554.0 297.3,554.5 298.6,554.1 299.8,554.4 301.1,554.6 302.3,554.6 303.6,554.3 304.8,554.7 306.1,554.6 307.3,554.0 308.6,554.4 309.8,554.4 311.1,555.2 312.3,554.9 313.6,555.2 314.8,555.4 316.1,556.1 317.3,556.8 318.6,557.6 319.8,556.8 321.1,556.7 322.3,554.9 323.6,555.3 324.8,555.4 326.1,555.6 327.3,555.2 328.6,554.9 329.8,554.8 331.1,555.2 332.3,554.3 333.6,555.0 334.8,554.5 336.1,554.5 337.3,554.3 338.6,554.7 339.8,554.6 341.1,554.4 342.3,554.3 343.6,554.1 344.8,553.7 346.1,554.2 347.3,553.3 348.6,553.6 349.8,553.7 351.1,553.5 352.3,554.0 353.6,553.3 354.8,553.3 356.1,553.2 357.3,553.7 358.6,553.8 359.8,553.5 361.1,553.4 362.3,553.0 363.6,553.6 364.8,553.5 366.1,553.3 367.3,553.7 368.6,553.9 369.8,553.7 371.1,553.9 372.3,553.8 373.6,553.5 374.8,553.6 376.1,554.2 377.3,553.9 378.6,553.8 379.8,554.4 381.1,554.0 382.3,554.3 383.6,554.3 384.8,554.1 386.1,554.1 387.3,554.4 388.6,554.4 389.8,554.5 391.1,554.7 392.3,555.0 393.6,554.1 394.8,554.5 396.1,554.5 397.3,554.2 398.6,554.7 399.8,555.1 401.1,554.5 402.3,554.6 403.6,554.8 404.8,554.7 406.1,554.7 407.3,554.9 408.6,554.9 409.8,554.4 411.1,554.6 412.3,555.0 413.6,554.8 414.8,554.1 416.1,555.1 417.3,554.9 418.6,554.6 419.8,553.9 421.1,554.0 422.3,554.7 423.6,554.0 424.8,554.2 426.1,554.3 427.3,554.3 428.6,554.5 429.8,553.8 431.1,554.2 432.3,553.8 433.6,553.7 434.8,554.4 436.1,553.7 437.3,554.1 438.6,553.6 439.8,554.4 441.1,554.0 442.3,554.2 443.6,554.5 444.8,554.3 446.1,554.6 447.3,554.7 448.6,554.5 449.8,554.2 451.1,554.1 452.3,554.2 453.6,554.2 454.8,554.9 456.1,554.1 457.3,554.4 458.6,554.4 459.8,554.4 461.1,554.3 462.3,554.4 463.6,554.7 464.8,554.5 466.1,555.3 467.3,555.1 468.6,554.2 469.8,555.3 471.1,554.7 472.3,554.4 473.6,554.7 474.8,554.9 476.1,555.1 477.3,554.3 478.6,554.3 479.8,554.5 481.1,554.3 482.3,554.6 483.6,554.0 484.8,554.2 486.1,553.5 487.3,554.3 488.6,554.4 489.8,553.7 491.1,554.0 492.3,553.3 493.6,553.6 494.8,553.9 496.1,553.7 497.3,553.7 498.6,553.7 499.8,553.4 501.1,554.0 502.3,553.2 503.6,552.9 504.8,552.6 506.1,553.0 507.3,553.2 508.6,553.2 509.8,552.7 511.1,552.5 512.3,552.6 513.5,551.8 514.8,552.5 516.0,551.6 517.3,551.8 518.5,552.0 519.8,551.6 521.0,551.4 522.3,552.0 523.5,551.8 524.8,552.2 526.0,552.2 527.3,552.0 528.5,551.5 529.8,552.1 531.0,551.6 532.3,551.9 533.5,551.9 534.8,551.8 536.0,552.3 537.3,552.2 538.5,552.3 539.8,552.1 541.0,552.3 542.3,552.1 543.5,552.0 544.8,552.1 546.0,552.5 547.3,551.9 548.5,552.6 549.8,552.6 551.0,552.3 552.3,552.0 553.5,551.8 554.8,552.4 556.0,552.5 557.3,552.8 558.5,552.2 559.8,552.6 561.0,552.4 562.3,552.3 563.5,552.8 564.8,552.4 566.0,552.7 567.3,552.6 568.5,552.1 569.8,552.5 571.0,552.3 572.3,553.2 573.5,552.5 574.8,552.3 576.0,552.2 577.3,552.4 578.5,552.2 579.8,552.5 581.0,552.7 582.3,552.6 583.5,552.6 584.8,552.2 586.0,552.4 587.3,552.7 588.5,552.5 589.8,552.5 591.0,551.8 592.3,552.5 593.5,552.3 594.8,552.4 596.0,552.1 597.3,552.7 598.5,552.7 599.8,551.9 601.0,552.8 602.3,552.0 603.5,552.4 604.8,552.4 606.0,551.9 607.3,552.8 608.5,552.3 609.8,552.1 611.0,552.6 612.3,552.2 613.5,551.9 614.8,552.3 616.0,552.5 617.3,552.8 618.5,552.7 619.8,552.5 621.0,552.2 622.3,552.8 623.5,552.2 624.8,552.5 626.0,552.9 627.3,552.5 628.5,552.4 629.8,552.0 631.0,553.0 632.3,552.5 633.5,552.8 634.8,552.6 636.0,552.3 637.3,552.5 638.5,552.8 639.8,551.9 641.0,552.1 642.3,552.4 643.5,552.4 644.8,552.9 646.0,552.4 647.3,552.1 648.5,552.6 649.8,551.9 651.0,551.9 652.3,552.7 653.5,552.9 654.8,552.6 656.0,552.1 657.3,552.5 658.5,552.7 659.8,552.3 661.0,552.2 662.3,551.9 663.5,551.8 664.8,552.3 666.0,552.0 667.3,552.5 668.5,552.3 669.8,552.3 671.0,551.9 672.3,552.5 673.5,552.2 674.8,552.3 676.0,552.8 677.3,552.7 678.5,552.1 679.8,552.2 681.0,552.7 682.3,552.6 683.5,552.8 684.8,552.1 686.0,552.4 687.3,552.2 688.5,552.2 689.8,552.3 691.0,552.1 692.3,552.4 693.5,552.4 694.8,552.3 696.0,552.5 697.3,552.6 698.5,552.5 699.8,552.0 701.0,552.2 702.3,552.1 703.5,551.8 704.8,552.3 706.0,552.7 707.3,552.7 708.5,552.4 709.8,552.3 711.0,552.0 712.3,552.1 713.5,552.4 714.8,552.9 716.0,552.2 717.3,551.9 718.5,552.8 719.8,552.3 721.0,552.7 722.3,552.4 723.5,552.2 724.8,552.3 726.0,552.4 727.3,552.4 728.5,552.3 729.8,552.6 731.0,551.9 732.3,552.5 733.5,552.2 734.8,552.0 736.0,552.0 737.3,551.7 738.5,551.9 739.8,552.6 741.0,552.4 742.3,551.7 743.5,552.5 744.8,552.4 746.0,552.0 747.3,552.0 748.5,552.3 749.8,552.2 751.0,552.5 752.3,552.5 753.5,552.6 754.8,552.7 756.0,552.5 757.3,552.3 758.5,552.1 759.8,552.0 761.0,552.5 762.3,551.8 763.5,551.9 764.8,551.9 766.0,551.8 767.3,552.5 768.5,552.0 769.8,552.3 771.0,552.8 772.3,552.5 773.5,552.3 774.8,552.5 776.0,552.5 777.3,552.7 778.5,552.1 779.8,552.5 781.0,551.9 782.3,552.3 783.5,552.6 784.8,552.0 786.0,552.6 787.3,552.2 788.5,552.4 789.8,551.7 791.0,552.0 792.3,552.0 793.5,551.7 794.8,552.9 796.0,552.0 797.3,552.2 798.5,552.3 799.8,552.2 801.0,551.9 802.3,552.5 803.5,552.1 804.8,552.3 806.0,552.6 807.3,551.7 808.5,551.9 809.8,551.7 811.0,552.2 812.3,551.7 813.5,552.2 814.8,552.3 816.0,552.5 817.3,552.5 818.5,551.8 819.8,552.6 821.0,552.3 822.3,551.9 823.5,552.3 824.8,552.3 826.0,551.9 827.3,552.3 828.5,551.8 829.8,552.2 831.0,552.6 832.3,552.0 833.5,552.5 834.8,552.8 836.0,552.3 837.3,552.0 838.5,552.1 839.8,552.6 841.0,551.9 842.3,552.2 843.5,552.1 844.8,552.5 846.0,551.7 847.3,551.9 848.5,552.1 849.8,552.0 851.0,552.3 852.3,552.5 853.5,552.1 854.8,552.1 856.0,552.1 857.3,552.3 858.5,552.6 859.8,552.5 861.0,552.2 862.3,551.8 863.5,552.4 864.8,552.3 866.0,552.2 867.3,552.0 868.5,552.1 869.8,552.4 871.0,552.1 872.3,552.3 873.5,552.0 874.8,552.0 876.0,551.9 877.3,551.9 878.5,552.2 879.8,552.1 881.0,552.4 882.3,552.1 883.5,552.1 884.8,551.7 886.0,552.0 887.3,552.1 888.5,551.7 889.8,551.9 891.0,551.9 892.3,552.1 893.5,552.2 894.8,551.9 896.0,551.9 897.3,551.7 898.5,552.3 899.8,551.7 901.0,552.2 902.3,552.5 903.5,552.1 904.8,551.6 906.0,551.7 907.3,552.5 908.5,552.4 909.8,552.2 911.0,551.9 912.3,552.0 913.5,551.9 914.8,552.5 916.0,551.9 917.3,552.4 918.5,552.8 919.8,552.1 921.0,552.5 922.3,552.6 923.5,552.2 924.8,552.4 926.0,551.8 927.3,552.0 928.5,552.1 929.8,551.7 931.0,551.8 932.3,552.4 933.5,552.2 934.8,552.0 936.0,552.2 937.3,552.5 938.5,551.8 939.8,551.6 941.0,552.1 942.3,551.7 943.5,551.9 944.8,552.6 946.0,552.3 947.3,552.2 948.5,551.5 949.8,551.8 951.0,552.4 952.3,551.9 953.5,551.6 954.8,551.9 956.0,551.8 957.3,552.3 958.5,552.4 959.6,552.3 959.6,561.5 958.5,561.5 957.3,561.5 956.0,561.3 954.8,561.3 953.5,560.9 952.3,561.4 951.0,561.2 949.8,561.4 948.5,560.8 947.3,561.2 946.0,561.3 944.8,561.5 943.5,560.9 942.3,560.8 941.0,561.3 939.8,561.3 938.5,560.7 937.3,561.6 936.0,561.3 934.8,561.3 933.5,561.3 932.3,561.1 931.0,561.0 929.8,560.9 928.5,561.4 927.3,560.7 926.0,560.9 924.8,561.0 923.5,561.5 922.3,561.5 921.0,560.9 919.8,561.3 918.5,561.6 917.3,561.2 916.0,561.2 914.8,561.7 913.5,560.9 912.3,561.2 911.0,561.2 909.8,561.4 908.5,561.3 907.3,561.5 906.0,560.7 904.8,561.2 903.5,561.4 902.3,561.3 901.0,560.9 899.8,561.0 898.5,561.3 897.3,561.1 896.0,561.6 894.8,561.6 893.5,561.0 892.3,561.2 891.0,560.6 889.8,561.6 888.5,561.0 887.3,561.1 886.0,561.3 884.8,560.8 883.5,561.2 882.3,560.7 881.0,561.4 879.8,561.5 878.5,561.3 877.3,561.0 876.0,561.3 874.8,561.4 873.5,561.5 872.3,561.4 871.0,561.0 869.8,561.4 868.5,561.2 867.3,561.2 866.0,561.4 864.8,561.5 863.5,561.7 862.3,560.9 861.0,561.2 859.8,561.5 858.5,561.7 857.3,561.6 856.0,560.9 854.8,561.1 853.5,561.1 852.3,561.4 851.0,561.4 849.8,561.2 848.5,561.7 847.3,561.5 846.0,560.8 844.8,561.4 843.5,561.1 842.3,561.0 841.0,561.1 839.8,561.2 838.5,561.2 837.3,561.3 836.0,561.5 834.8,561.9 833.5,561.3 832.3,561.6 831.0,561.4 829.8,561.4 828.5,561.0 827.3,561.4 826.0,561.3 824.8,561.2 823.5,561.6 822.3,561.0 821.0,561.7 819.8,561.4 818.5,561.0 817.3,561.1 816.0,561.3 814.8,561.0 813.5,561.3 812.3,560.8 811.0,560.6 809.8,561.3 808.5,560.7 807.3,561.1 806.0,561.4 804.8,561.2 803.5,561.2 802.3,561.7 801.0,561.4 799.8,561.1 798.5,561.1 797.3,561.1 796.0,561.2 794.8,561.6 793.5,561.1 792.3,561.4 791.0,561.3 789.8,561.0 788.5,561.3 787.3,561.3 786.0,561.5 784.8,560.9 783.5,561.1 782.3,561.1 781.0,561.1 779.8,561.7 778.5,561.5 777.3,561.4 776.0,561.4 774.8,561.5 773.5,561.2 772.3,561.4 771.0,561.6 769.8,561.4 768.5,561.1 767.3,561.5 766.0,561.3 764.8,561.2 763.5,561.5 762.3,561.0 761.0,561.3 759.8,561.5 758.5,560.7 757.3,561.8 756.0,561.2 754.8,561.2 753.5,561.5 752.3,561.3 751.0,560.9 749.8,561.2 748.5,561.4 747.3,561.2 746.0,561.2 744.8,561.7 743.5,561.5 742.3,561.4 741.0,561.5 739.8,561.6 738.5,561.0 737.3,561.1 736.0,561.1 734.8,561.2 733.5,560.8 732.3,561.6 731.0,561.5 729.8,561.6 728.5,561.3 727.3,561.5 726.0,561.2 724.8,561.3 723.5,561.5 722.3,561.7 721.0,561.2 719.8,561.1 718.5,561.4 717.3,560.9 716.0,561.8 714.8,561.6 713.5,561.3 712.3,561.0 711.0,561.1 709.8,561.5 708.5,561.9 707.3,561.7 706.0,561.5 704.8,561.4 703.5,560.6 702.3,561.4 701.0,561.2 699.8,561.1 698.5,561.5 697.3,561.3 696.0,561.0 694.8,561.1 693.5,561.8 692.3,561.5 691.0,561.2 689.8,561.1 688.5,561.2 687.3,561.0 686.0,561.0 684.8,560.9 683.5,561.5 682.3,561.1 681.0,561.6 679.8,561.1 678.5,561.3 677.3,561.3 676.0,561.6 674.8,561.6 673.5,561.4 672.3,561.3 671.0,561.3 669.8,561.3 668.5,561.1 667.3,561.4 666.0,560.7 664.8,561.1 663.5,560.8 662.3,561.2 661.0,561.8 659.8,561.5 658.5,561.2 657.3,561.5 656.0,560.9 654.8,562.0 653.5,561.9 652.3,561.7 651.0,561.5 649.8,561.3 648.5,561.5 647.3,561.2 646.0,561.5 644.8,561.6 643.5,561.5 642.3,561.3 641.0,561.0 639.8,561.0 638.5,561.8 637.3,561.5 636.0,561.4 634.8,562.0 633.5,561.8 632.3,561.4 631.0,561.8 629.8,561.6 628.5,561.0 627.3,561.7 626.0,561.4 624.8,561.5 623.5,561.0 622.3,561.9 621.0,561.7 619.8,561.8 618.5,561.5 617.3,561.3 616.0,561.3 614.8,561.3 613.5,560.9 612.3,561.5 611.0,561.5 609.8,561.6 608.5,561.1 607.3,561.2 606.0,560.9 604.8,561.1 603.5,561.8 602.3,561.4 601.0,561.4 599.8,561.5 598.5,561.5 597.3,561.6 596.0,561.6 594.8,561.9 593.5,561.0 592.3,561.0 591.0,561.1 589.8,561.8 588.5,560.9 587.3,561.8 586.0,561.4 584.8,561.3 583.5,561.2 582.3,561.3 581.0,561.9 579.8,562.0 578.5,561.6 577.3,561.3 576.0,561.5 574.8,561.0 573.5,562.0 572.3,561.7 571.0,561.3 569.8,561.8 568.5,561.0 567.3,561.8 566.0,561.5 564.8,561.2 563.5,561.7 562.3,561.1 561.0,561.6 559.8,561.9 558.5,561.1 557.3,561.4 556.0,561.4 554.8,561.2 553.5,561.2 552.3,561.8 551.0,561.2 549.8,561.7 548.5,561.4 547.3,561.6 546.0,561.7 544.8,561.4 543.5,561.4 542.3,561.5 541.0,561.6 539.8,561.8 538.5,561.0 537.3,561.1 536.0,561.4 534.8,561.1 533.5,561.1 532.3,560.5 531.0,560.7 529.8,560.8 528.5,561.1 527.3,561.3 526.0,560.7 524.8,560.9 523.5,561.2 522.3,561.2 521.0,560.7 519.8,561.1 518.5,561.2 517.3,561.0 516.0,560.9 514.8,561.1 513.5,560.8 512.3,561.5 511.1,561.1 509.8,561.6 508.6,562.4 507.3,562.2 506.1,562.2 504.8,561.7 503.6,562.0 502.3,562.4 501.1,562.8 499.8,562.8 498.6,563.0 497.3,563.0 496.1,562.7 494.8,562.9 493.6,563.1 492.3,562.9 491.1,563.0 489.8,563.4 488.6,563.2 487.3,563.2 486.1,563.1 484.8,563.4 483.6,563.4 482.3,563.9 481.1,563.5 479.8,563.9 478.6,563.7 477.3,563.2 476.1,564.0 474.8,564.0 473.6,563.7 472.3,563.1 471.1,564.1 469.8,563.8 468.6,563.4 467.3,564.0 466.1,564.1 464.8,563.8 463.6,563.5 462.3,563.8 461.1,563.2 459.8,563.6 458.6,563.5 457.3,563.0 456.1,563.4 454.8,563.2 453.6,563.0 452.3,562.9 451.1,562.7 449.8,563.4 448.6,562.7 447.3,563.5 446.1,563.6 444.8,563.6 443.6,563.4 442.3,563.2 441.1,562.8 439.8,563.1 438.6,562.4 437.3,562.4 436.1,562.5 434.8,563.2 433.6,562.2 432.3,562.7 431.1,562.9 429.8,562.3 428.6,563.0 427.3,562.9 426.1,562.5 424.8,562.9 423.6,562.6 422.3,563.2 421.1,562.4 419.8,563.0 418.6,563.5 417.3,563.8 416.1,563.8 414.8,563.1 413.6,563.2 412.3,563.9 411.1,563.9 409.8,563.7 408.6,563.8 407.3,563.9 406.1,563.7 404.8,563.4 403.6,563.9 402.3,563.5 401.1,563.9 399.8,563.7 398.6,563.6 397.3,563.3 396.1,563.2 394.8,563.8 393.6,563.3 392.3,563.4 391.1,563.5 389.8,563.6 388.6,563.1 387.3,563.5 386.1,563.3 384.8,563.4 383.6,563.5 382.3,563.3 381.1,563.1 379.8,563.5 378.6,562.9 377.3,562.7 376.1,563.5 374.8,562.9 373.6,562.8 372.3,563.3 371.1,563.4 369.8,563.1 368.6,562.8 367.3,563.2 366.1,563.2 364.8,563.1 363.6,563.5 362.3,562.9 361.1,563.5 359.8,562.8 358.6,563.6 357.3,563.1 356.1,563.3 354.8,562.8 353.6,562.8 352.3,563.3 351.1,563.6 349.8,563.5 348.6,563.3 347.3,562.5 346.1,563.2 344.8,563.5 343.6,563.3 342.3,563.6 341.1,563.5 339.8,563.5 338.6,563.6 337.3,563.6 336.1,563.8 334.8,563.5 333.6,563.8 332.3,563.3 331.1,563.9 329.8,563.9 328.6,564.1 327.3,564.3 326.1,564.5 324.8,564.6 323.6,564.0 322.3,564.2 321.1,565.5 319.8,565.5 318.6,566.3 317.3,565.4 316.1,564.8 314.8,563.9 313.6,564.4 312.3,563.8 311.1,563.8 309.8,563.3 308.6,563.3 307.3,563.2 306.1,563.3 304.8,563.4 303.6,563.6 302.3,563.7 301.1,563.7 299.8,562.7 298.6,562.9 297.3,563.0 296.1,563.0 294.8,562.8 293.6,562.6 292.3,562.6 291.1,562.7 289.8,562.3 288.6,562.0 287.3,561.7 286.1,559.6 284.8,559.7 283.6,560.3 282.3,560.0 281.1,559.6 279.8,558.9 278.6,559.6 277.3,559.3 276.1,559.4 274.8,559.5 273.6,559.6 272.3,559.1 271.1,559.3 269.8,558.4 268.6,558.9 267.3,558.7 266.1,558.2 264.8,558.7 263.6,558.6 262.3,559.0 261.1,558.9 259.8,558.1 258.6,558.8 257.3,558.8 256.1,558.3 254.8,558.1 253.6,558.7 252.3,558.9 251.1,558.3 249.8,557.7 248.6,558.3 247.3,558.5 246.1,558.3 244.8,558.2 243.6,557.9 242.3,557.6 241.1,558.3 239.8,558.0 238.6,557.8 237.3,557.4 236.1,557.3 234.8,557.6 233.6,558.1 232.3,557.9 231.1,557.7 229.8,557.7 228.6,558.1 227.3,557.2 226.1,557.5 224.8,558.0 223.6,557.7 222.3,557.6 221.1,558.0 219.8,557.3 218.6,557.5 217.3,557.6 216.1,557.0 214.8,556.8 213.6,556.7 212.3,556.9 211.1,556.9 209.8,556.6 208.6,556.8 207.3,556.9 206.1,557.0 204.8,556.5 203.6,556.4 202.3,556.9 201.1,556.1 199.8,556.5 198.6,557.0 197.3,556.3 196.1,557.2 194.8,557.4 193.6,556.5 192.3,556.5 191.1,557.0 189.8,557.5 188.6,557.3 187.3,556.6 186.1,556.7 184.8,557.7 183.6,557.0 182.3,557.6 181.1,557.0 179.8,557.0 178.6,557.2 177.3,557.6 176.1,557.0 174.8,557.9 173.6,557.2 172.3,557.5 171.1,556.8 169.8,557.5 168.6,557.3 167.3,557.4 166.1,557.8 164.8,557.4 163.6,558.1 162.3,558.0 161.1,557.3 159.8,557.5 158.6,557.6 157.3,557.4 156.1,557.6 154.8,557.6 153.6,557.9 152.3,557.6 151.1,557.5 149.8,557.0 148.6,557.3 147.3,557.0 146.1,557.0 144.8,557.4 143.6,557.1 142.3,556.8 141.1,557.0 139.8,557.4 138.6,557.5 137.3,557.5 136.1,557.1 134.8,557.0 133.6,557.4 132.3,556.5 131.1,556.7 129.8,556.7 128.6,557.2 127.3,556.9 126.0,556.9 124.8,556.8 123.5,557.1 122.3,556.9 121.0,557.1 119.8,557.0 118.5,556.9 117.3,557.0"/><polygon fill="#d1d6e3" points="117.3,557.0 118.5,556.9 119.8,557.0 121.0,557.1 122.3,556.9 123.5,557.1 124.8,556.8 126.0,556.9 127.3,556.9 128.6,557.2 129.8,556.7 131.1,556.7 132.3,556.5 133.6,557.4 134.8,557.0 136.1,557.1 137.3,557.5 138.6,557.5 139.8,557.4 141.1,557.0 142.3,556.8 143.6,557.1 144.8,557.4 146.1,557.0 147.3,557.0 148.6,557.3 149.8,557.0 151.1,557.5 152.3,557.6 153.6,557.9 154.8,557.6 156.1,557.6 157.3,557.4 158.6,557.6 159.8,557.5 161.1,557.3 162.3,558.0 163.6,558.1 164.8,557.4 166.1,557.8 167.3,557.4 168.6,557.3 169.8,557.5 171.1,556.8 172.3,557.5 173.6,557.2 174.8,557.9 176.1,557.0 177.3,557.6 178.6,557.2 179.8,557.0 181.1,557.0 182.3,557.6 183.6,557.0 184.8,557.7 186.1,556.7 187.3,556.6 188.6,557.3 189.8,557.5 191.1,557.0 192.3,556.5 193.6,556.5 194.8,557.4 196.1,557.2 197.3,556.3 198.6,557.0 199.8,556.5 201.1,556.1 202.3,556.9 203.6,556.4 204.8,556.5 206.1,557.0 207.3,556.9 208.6,556.8 209.8,556.6 211.1,556.9 212.3,556.9 213.6,556.7 214.8,556.8 216.1,557.0 217.3,557.6 218.6,557.5 219.8,557.3 221.1,558.0 222.3,557.6 223.6,557.7 224.8,558.0 226.1,557.5 227.3,557.2 228.6,558.1 229.8,557.7 231.1,557.7 232.3,557.9 233.6,558.1 234.8,557.6 236.1,557.3 237.3,557.4 238.6,557.8 239.8,558.0 241.1,558.3 242.3,557.6 243.6,557.9 244.8,558.2 246.1,558.3 247.3,558.5 248.6,558.3 249.8,557.7 251.1,558.3 252.3,558.9 253.6,558.7 254.8,558.1 256.1,558.3 257.3,558.8 258.6,558.8 259.8,558.1 261.1,558.9 262.3,559.0 263.6,558.6 264.8,558.7 266.1,558.2 267.3,558.7 268.6,558.9 269.8,558.4 271.1,559.3 272.3,559.1 273.6,559.6 274.8,559.5 276.1,559.4 277.3,559.3 278.6,559.6 279.8,558.9 281.1,559.6 282.3,560.0 283.6,560.3 284.8,559.7 286.1,559.6 287.3,561.7 288.6,562.0 289.8,562.3 291.1,562.7 292.3,562.6 293.6,562.6 294.8,562.8 296.1,563.0 297.3,563.0 298.6,562.9 299.8,562.7 301.1,563.7 302.3,563.7 303.6,563.6 304.8,563.4 306.1,563.3 307.3,563.2 308.6,563.3 309.8,563.3 311.1,563.8 312.3,563.8 313.6,564.4 314.8,563.9 316.1,564.8 317.3,565.4 318.6,566.3 319.8,565.5 321.1,565.5 322.3,564.2 323.6,564.0 324.8,564.6 326.1,564.5 327.3,564.3 328.6,564.1 329.8,563.9 331.1,563.9 332.3,563.3 333.6,563.8 334.8,563.5 336.1,563.8 337.3,563.6 338.6,563.6 339.8,563.5 341.1,563.5 342.3,563.6 343.6,563.3 344.8,563.5 346.1,563.2 347.3,562.5 348.6,563.3 349.8,563.5 351.1,563.6 352.3,563.3 353.6,562.8 354.8,562.8 356.1,563.3 357.3,563.1 358.6,563.6 359.8,562.8 361.1,563.5 362.3,562.9 363.6,563.5 364.8,563.1 366.1,563.2 367.3,563.2 368.6,562.8 369.8,563.1 371.1,563.4 372.3,563.3 373.6,562.8 374.8,562.9 376.1,563.5 377.3,562.7 378.6,562.9 379.8,563.5 381.1,563.1 382.3,563.3 383.6,563.5 384.8,563.4 386.1,563.3 387.3,563.5 388.6,563.1 389.8,563.6 391.1,563.5 392.3,563.4 393.6,563.3 394.8,563.8 396.1,563.2 397.3,563.3 398.6,563.6 399.8,563.7 401.1,563.9 402.3,563.5 403.6,563.9 404.8,563.4 406.1,563.7 407.3,563.9 408.6,563.8 409.8,563.7 411.1,563.9 412.3,563.9 413.6,563.2 414.8,563.1 416.1,563.8 417.3,563.8 418.6,563.5 419.8,563.0 421.1,562.4 422.3,563.2 423.6,562.6 424.8,562.9 426.1,562.5 427.3,562.9 428.6,563.0 429.8,562.3 431.1,562.9 432.3,562.7 433.6,562.2 434.8,563.2 436.1,562.5 437.3,562.4 438.6,562.4 439.8,563.1 441.1,562.8 442.3,563.2 443.6,563.4 444.8,563.6 446.1,563.6 447.3,563.5 448.6,562.7 449.8,563.4 451.1,562.7 452.3,562.9 453.6,563.0 454.8,563.2 456.1,563.4 457.3,563.0 458.6,563.5 459.8,563.6 461.1,563.2 462.3,563.8 463.6,563.5 464.8,563.8 466.1,564.1 467.3,564.0 468.6,563.4 469.8,563.8 471.1,564.1 472.3,563.1 473.6,563.7 474.8,564.0 476.1,564.0 477.3,563.2 478.6,563.7 479.8,563.9 481.1,563.5 482.3,563.9 483.6,563.4 484.8,563.4 486.1,563.1 487.3,563.2 488.6,563.2 489.8,563.4 491.1,563.0 492.3,562.9 493.6,563.1 494.8,562.9 496.1,562.7 497.3,563.0 498.6,563.0 499.8,562.8 501.1,562.8 502.3,562.4 503.6,562.0 504.8,561.7 506.1,562.2 507.3,562.2 508.6,562.4 509.8,561.6 511.1,561.1 512.3,561.5 513.5,560.8 514.8,561.1 516.0,560.9 517.3,561.0 518.5,561.2 519.8,561.1 521.0,560.7 522.3,561.2 523.5,561.2 524.8,560.9 526.0,560.7 527.3,561.3 528.5,561.1 529.8,560.8 531.0,560.7 532.3,560.5 533.5,561.1 534.8,561.1 536.0,561.4 537.3,561.1 538.5,561.0 539.8,561.8 541.0,561.6 542.3,561.5 543.5,561.4 544.8,561.4 546.0,561.7 547.3,561.6 548.5,561.4 549.8,561.7 551.0,561.2 552.3,561.8 553.5,561.2 554.8,561.2 556.0,561.4 557.3,561.4 558.5,561.1 559.8,561.9 561.0,561.6 562.3,561.1 563.5,561.7 564.8,561.2 566.0,561.5 567.3,561.8 568.5,561.0 569.8,561.8 571.0,561.3 572.3,561.7 573.5,562.0 574.8,561.0 576.0,561.5 577.3,561.3 578.5,561.6 579.8,562.0 581.0,561.9 582.3,561.3 583.5,561.2 584.8,561.3 586.0,561.4 587.3,561.8 588.5,560.9 589.8,561.8 591.0,561.1 592.3,561.0 593.5,561.0 594.8,561.9 596.0,561.6 597.3,561.6 598.5,561.5 599.8,561.5 601.0,561.4 602.3,561.4 603.5,561.8 604.8,561.1 606.0,560.9 607.3,561.2 608.5,561.1 609.8,561.6 611.0,561.5 612.3,561.5 613.5,560.9 614.8,561.3 616.0,561.3 617.3,561.3 618.5,561.5 619.8,561.8 621.0,561.7 622.3,561.9 623.5,561.0 624.8,561.5 626.0,561.4 627.3,561.7 628.5,561.0 629.8,561.6 631.0,561.8 632.3,561.4 633.5,561.8 634.8,562.0 636.0,561.4 637.3,561.5 638.5,561.8 639.8,561.0 641.0,561.0 642.3,561.3 643.5,561.5 644.8,561.6 646.0,561.5 647.3,561.2 648.5,561.5 649.8,561.3 651.0,561.5 652.3,561.7 653.5,561.9 654.8,562.0 656.0,560.9 657.3,561.5 658.5,561.2 659.8,561.5 661.0,561.8 662.3,561.2 663.5,560.8 664.8,561.1 666.0,560.7 667.3,561.4 668.5,561.1 669.8,561.3 671.0,561.3 672.3,561.3 673.5,561.4 674.8,561.6 676.0,561.6 677.3,561.3 678.5,561.3 679.8,561.1 681.0,561.6 682.3,561.1 683.5,561.5 684.8,560.9 686.0,561.0 687.3,561.0 688.5,561.2 689.8,561.1 691.0,561.2 692.3,561.5 693.5,561.8 694.8,561.1 696.0,561.0 697.3,561.3 698.5,561.5 699.8,561.1 701.0,561.2 702.3,561.4 703.5,560.6 704.8,561.4 706.0,561.5 707.3,561.7 708.5,561.9 709.8,561.5 711.0,561.1 712.3,561.0 713.5,561.3 714.8,561.6 716.0,561.8 717.3,560.9 718.5,561.4 719.8,561.1 721.0,561.2 722.3,561.7 723.5,561.5 724.8,561.3 726.0,561.2 727.3,561.5 728.5,561.3 729.8,561.6 731.0,561.5 732.3,561.6 733.5,560.8 734.8,561.2 736.0,561.1 737.3,561.1 738.5,561.0 739.8,561.6 741.0,561.5 742.3,561.4 743.5,561.5 744.8,561.7 746.0,561.2 747.3,561.2 748.5,561.4 749.8,561.2 751.0,560.9 752.3,561.3 753.5,561.5 754.8,561.2 756.0,561.2 757.3,561.8 758.5,560.7 759.8,561.5 761.0,561.3 762.3,561.0 763.5,561.5 764.8,561.2 766.0,561.3 767.3,561.5 768.5,561.1 769.8,561.4 771.0,561.6 772.3,561.4 773.5,561.2 774.8,561.5 776.0,561.4 777.3,561.4 778.5,561.5 779.8,561.7 781.0,561.1 782.3,561.1 783.5,561.1 784.8,560.9 786.0,561.5 787.3,561.3 788.5,561.3 789.8,561.0 791.0,561.3 792.3,561.4 793.5,561.1 794.8,561.6 796.0,561.2 797.3,561.1 798.5,561.1 799.8,561.1 801.0,561.4 802.3,561.7 803.5,561.2 804.8,561.2 806.0,561.4 807.3,561.1 808.5,560.7 809.8,561.3 811.0,560.6 812.3,560.8 813.5,561.3 814.8,561.0 816.0,561.3 817.3,561.1 818.5,561.0 819.8,561.4 821.0,561.7 822.3,561.0 823.5,561.6 824.8,561.2 826.0,561.3 827.3,561.4 828.5,561.0 829.8,561.4 831.0,561.4 832.3,561.6 833.5,561.3 834.8,561.9 836.0,561.5 837.3,561.3 838.5,561.2 839.8,561.2 841.0,561.1 842.3,561.0 843.5,561.1 844.8,561.4 846.0,560.8 847.3,561.5 848.5,561.7 849.8,561.2 851.0,561.4 852.3,561.4 853.5,561.1 854.8,561.1 856.0,560.9 857.3,561.6 858.5,561.7 859.8,561.5 861.0,561.2 862.3,560.9 863.5,561.7 864.8,561.5 866.0,561.4 867.3,561.2 868.5,561.2 869.8,561.4 871.0,561.0 872.3,561.4 873.5,561.5 874.8,561.4 876.0,561.3 877.3,561.0 878.5,561.3 879.8,561.5 881.0,561.4 882.3,560.7 883.5,561.2 884.8,560.8 886.0,561.3 887.3,561.1 888.5,561.0 889.8,561.6 891.0,560.6 892.3,561.2 893.5,561.0 894.8,561.6 896.0,561.6 897.3,561.1 898.5,561.3 899.8,561.0 901.0,560.9 902.3,561.3 903.5,561.4 904.8,561.2 906.0,560.7 907.3,561.5 908.5,561.3 909.8,561.4 911.0,561.2 912.3,561.2 913.5,560.9 914.8,561.7 916.0,561.2 917.3,561.2 918.5,561.6 919.8,561.3 921.0,560.9 922.3,561.5 923.5,561.5 924.8,561.0 926.0,560.9 927.3,560.7 928.5,561.4 929.8,560.9 931.0,561.0 932.3,561.1 933.5,561.3 934.8,561.3 936.0,561.3 937.3,561.6 938.5,560.7 939.8,561.3 941.0,561.3 942.3,560.8 943.5,560.9 944.8,561.5 946.0,561.3 947.3,561.2 948.5,560.8 949.8,561.4 951.0,561.2 952.3,561.4 953.5,560.9 954.8,561.3 956.0,561.3 957.3,561.5 958.5,561.5 959.6,561.5 959.6,624.5 117.3,624.5"/></svg>
<svg class="b" style="left:0;top:0" width="1024" height="730" viewBox="0 0 1024 730"><path d="M634.3 626.5 A23 23 0 0 0 674.6 637.3" fill="none" stroke="rgba(224,225,229,0.6)" stroke-width="4.8" stroke-linecap="round"/><text x="709" y="633.8" font-family="Liberation Sans" font-weight="700" font-size="34" letter-spacing="0.2" fill="rgba(224,225,229,0.6)">CoinMarketCap</text></svg>
<div class="t" style="left:120.90px;top:650.96px;font-size:18px;line-height:21.6px;color:#66738a;font-weight:400;letter-spacing:0.6px;">8 Apr</div>
<div class="t" style="left:313.40px;top:650.96px;font-size:18px;line-height:21.6px;color:#66738a;font-weight:400;letter-spacing:0.3px;">15 Apr</div>
<div class="t" style="left:510.30px;top:650.96px;font-size:18px;line-height:21.6px;color:#66738a;font-weight:400;letter-spacing:0.4px;">22 Apr</div>
<div class="t" style="left:707.10px;top:650.96px;font-size:18px;line-height:21.6px;color:#66738a;font-weight:400;letter-spacing:0.4px;">29 Apr</div>
<div class="t" style="left:906.70px;top:650.96px;font-size:18px;line-height:21.6px;color:#66738a;font-weight:400;letter-spacing:0.3px;">6 May</div>
<svg class="b" style="left:0;top:0" width="1024" height="730" viewBox="0 0 1024 730"><line x1="117.2" y1="301.3" x2="966" y2="301.3" stroke="#1c1f2a" stroke-width="2" stroke-dasharray="2 5.837"/><line x1="117.2" y1="384.5" x2="966" y2="384.5" stroke="#1c1f2a" stroke-width="2" stroke-dasharray="2 5.837"/><line x1="117.2" y1="464.4" x2="966" y2="464.4" stroke="#1c1f2a" stroke-width="2" stroke-dasharray="2 5.837"/><line x1="117.2" y1="546.0" x2="966" y2="546.0" stroke="#1c1f2a" stroke-width="2" stroke-dasharray="2 5.837"/><line x1="117.2" y1="626.0" x2="966" y2="626.0" stroke="#5c6272" stroke-width="2" stroke-dasharray="2 5.837"/></svg>
<div class="b" style="left:586px;top:305px;width:350px;height:326px;background:#fff;border-radius:12px;box-shadow:0 8px 32px rgba(88,102,126,0.12)"></div>
<div class="t" style="left:611.30px;top:332.96px;font-size:18px;line-height:21.6px;color:#0d1421;font-weight:400;letter-spacing:0.8px;-webkit-text-stroke:0.25px #0d1421;">05/07/2024</div>
<div class="t" style="left:809.60px;top:332.86px;font-size:18px;line-height:21.6px;color:#66738a;font-weight:400;letter-spacing:-0.2px;">12:15:00 AM</div>
<div class="d" style="left:613.10px;top:382.10px;width:13px;height:13px;background:#4f6bed"></div>
<div class="t" style="left:645.50px;top:378.12px;font-size:19px;line-height:22.8px;color:#58667e;font-weight:400;letter-spacing:0.33px;">BTC:</div>
<div class="t" style="left:695.10px;top:379.06px;font-size:18px;line-height:21.6px;color:#0d1421;font-weight:400;letter-spacing:1.0px;-webkit-text-stroke:0.55px #0d1421;">53.37%</div>
<div class="d" style="left:613.10px;top:422.82px;width:13px;height:13px;background:#5dc48a"></div>
<div class="t" style="left:645.50px;top:418.90px;font-size:19px;line-height:22.8px;color:#58667e;font-weight:400;letter-spacing:0.07px;">ETH:</div>
<div class="t" style="left:693.20px;top:419.84px;font-size:18px;line-height:21.6px;color:#0d1421;font-weight:400;letter-spacing:0.38px;-webkit-text-stroke:0.55px #0d1421;">15.79%</div>
<div class="d" style="left:613.10px;top:463.54px;width:13px;height:13px;background:#eab986"></div>
<div class="t" style="left:645.80px;top:459.68px;font-size:19px;line-height:22.8px;color:#58667e;font-weight:400;letter-spacing:0.33px;">USDT:</div>
<div class="t" style="left:707.60px;top:460.62px;font-size:18px;line-height:21.6px;color:#0d1421;font-weight:400;letter-spacing:0.57px;-webkit-text-stroke:0.55px #0d1421;">4.72%</div>
<div class="d" style="left:613.10px;top:504.26px;width:13px;height:13px;background:#ec7d63"></div>
<div class="t" style="left:645.50px;top:500.46px;font-size:19px;line-height:22.8px;color:#58667e;font-weight:400;letter-spacing:0.17px;">BNB:</div>
<div class="t" style="left:695.80px;top:501.40px;font-size:18px;line-height:21.6px;color:#0d1421;font-weight:400;letter-spacing:0.83px;-webkit-text-stroke:0.55px #0d1421;">3.70%</div>
<div class="d" style="left:613.10px;top:544.98px;width:13px;height:13px;background:#50aecb"></div>
<div class="t" style="left:645.80px;top:541.24px;font-size:19px;line-height:22.8px;color:#58667e;font-weight:400;letter-spacing:-0.2px;">SOL:</div>
<div class="t" style="left:694.60px;top:542.18px;font-size:18px;line-height:21.6px;color:#0d1421;font-weight:400;letter-spacing:1.05px;-webkit-text-stroke:0.55px #0d1421;">2.92%</div>
<div class="d" style="left:613.10px;top:585.70px;width:13px;height:13px;background:#d1d6e3"></div>
<div class="t" style="left:645.80px;top:582.02px;font-size:19px;line-height:22.8px;color:#58667e;font-weight:400;letter-spacing:0.8px;">Others:</div>
<div class="t" style="left:717.40px;top:582.96px;font-size:18px;line-height:21.6px;color:#0d1421;font-weight:400;letter-spacing:0.92px;-webkit-text-stroke:0.55px #0d1421;">19.49%</div>
</body></html>
